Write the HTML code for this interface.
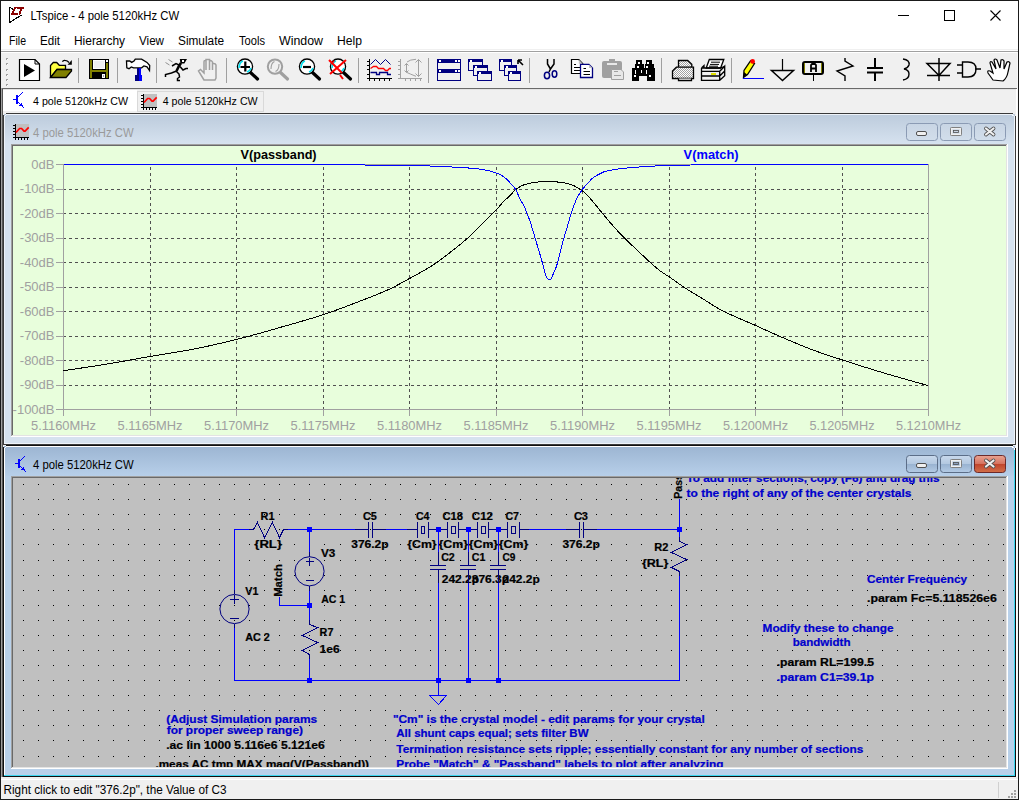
<!DOCTYPE html><html><head><meta charset="utf-8"><style>
html,body{margin:0;padding:0;width:1019px;height:800px;overflow:hidden;background:#f0f0f0;position:relative}
*{box-sizing:border-box}
.a{position:absolute}
svg text{font-family:"Liberation Sans",sans-serif}
body{font-family:"Liberation Sans",sans-serif}

</style></head><body>
<svg class="a" style="left:0;top:0" width="1019" height="800" shape-rendering="crispEdges"><defs>
<linearGradient id="gtI" gradientUnits="userSpaceOnUse" x1="0" y1="114" x2="0" y2="144"><stop offset="0" stop-color="#bccbdc"/><stop offset="1" stop-color="#d6e2ef"/></linearGradient>
<linearGradient id="gtA" gradientUnits="userSpaceOnUse" x1="0" y1="446" x2="0" y2="476"><stop offset="0" stop-color="#9cb5d2"/><stop offset="1" stop-color="#b7cfe9"/></linearGradient>
<linearGradient id="gbtnI" x1="0" y1="0" x2="0" y2="1"><stop offset="0" stop-color="#c8d5e4"/><stop offset="1" stop-color="#d2deeb"/></linearGradient>
<linearGradient id="gbtnA" x1="0" y1="0" x2="0" y2="1"><stop offset="0" stop-color="#c9d9ec"/><stop offset="0.5" stop-color="#b3c8e0"/><stop offset="0.5" stop-color="#98b2d0"/><stop offset="1" stop-color="#b4cbe5"/></linearGradient>
<linearGradient id="gclose" x1="0" y1="0" x2="0" y2="1"><stop offset="0" stop-color="#e9a493"/><stop offset="0.5" stop-color="#d5715d"/><stop offset="0.5" stop-color="#c0432b"/><stop offset="1" stop-color="#d2704a"/></linearGradient>
</defs><rect x="0" y="0" width="1019" height="800" fill="#f0f0f0" /><rect x="1" y="1" width="1017" height="48" fill="#ffffff" /><path d="M9.5 7 V22.5 L21.5 15 M9.5 7 L13 9.5" fill="none" stroke="#000" stroke-width="1.1"/><path d="M14.5 7 H16.8 L13.8 12.8 H17.6 L18 14.6 H10.8 Z" fill="#8b0000"/><path d="M16.8 7 H24.6 L23.4 8.8 H22.3 L20.4 14.5 H18.6 L20.2 8.8 H17 Z" fill="#8b0000"/><text x="30.6" y="20" font-size="12" font-weight="normal" fill="#000" textLength="148.5" lengthAdjust="spacingAndGlyphs" >LTspice - 4 pole 5120kHz CW</text><path d="M898 15.5 H909" stroke="#000" stroke-width="1"/><rect x="944.5" y="10.5" width="10" height="10" fill="none" stroke="#000" stroke-width="1"/><path d="M990.5 10.5 L1000.5 20.5 M1000.5 10.5 L990.5 20.5" stroke="#000" stroke-width="1.1" shape-rendering="auto"/><text x="9" y="45" font-size="12" font-weight="normal" fill="#000" textLength="17" lengthAdjust="spacingAndGlyphs" >File</text><text x="40" y="45" font-size="12" font-weight="normal" fill="#000" textLength="20" lengthAdjust="spacingAndGlyphs" >Edit</text><text x="74" y="45" font-size="12" font-weight="normal" fill="#000" textLength="51" lengthAdjust="spacingAndGlyphs" >Hierarchy</text><text x="139" y="45" font-size="12" font-weight="normal" fill="#000" textLength="25" lengthAdjust="spacingAndGlyphs" >View</text><text x="178" y="45" font-size="12" font-weight="normal" fill="#000" textLength="46" lengthAdjust="spacingAndGlyphs" >Simulate</text><text x="239" y="45" font-size="12" font-weight="normal" fill="#000" textLength="26" lengthAdjust="spacingAndGlyphs" >Tools</text><text x="279" y="45" font-size="12" font-weight="normal" fill="#000" textLength="44" lengthAdjust="spacingAndGlyphs" >Window</text><text x="337" y="45" font-size="12" font-weight="normal" fill="#000" textLength="25" lengthAdjust="spacingAndGlyphs" >Help</text><rect x="1" y="49" width="1017" height="1" fill="#f0f0f0" /><rect x="1" y="50" width="1017" height="1" fill="#ffffff" /><rect x="1" y="51" width="1017" height="1" fill="#a0a0a0" /><rect x="1" y="52" width="1017" height="1" fill="#ffffff" /><rect x="6" y="58" width="2" height="2" fill="#a0a0a0" /><rect x="7" y="59" width="1" height="1" fill="#fff" /><rect x="6" y="63" width="2" height="2" fill="#a0a0a0" /><rect x="7" y="64" width="1" height="1" fill="#fff" /><rect x="6" y="69" width="2" height="2" fill="#a0a0a0" /><rect x="7" y="70" width="1" height="1" fill="#fff" /><rect x="6" y="74" width="2" height="2" fill="#a0a0a0" /><rect x="7" y="75" width="1" height="1" fill="#fff" /><rect x="6" y="79" width="2" height="2" fill="#a0a0a0" /><rect x="7" y="80" width="1" height="1" fill="#fff" /><rect x="6" y="84" width="2" height="2" fill="#a0a0a0" /><rect x="7" y="85" width="1" height="1" fill="#fff" /><g shape-rendering="auto"><path d="M19.5 59.5 H35 L39.5 64 V80.5 H19.5 Z" fill="#fff" stroke="#000" stroke-width="1.2"/><path d="M35 59.5 V64 H39.5" fill="none" stroke="#000"/><path d="M24 64 L35 70.5 L24 77 Z" fill="#000"/><path d="M50.5 77.5 V65.5 L53.3 62.5 H56.7 L59.3 65.3 H65.5 V69.5 H57 L51 77" fill="#ffff40" stroke="#000" stroke-width="1.3"/><path d="M50.5 77.5 L57 69.5 H71.5 V71 L66 77.5 Z" fill="#808000" stroke="#000" stroke-width="1.3"/><path d="M62.5 61.8 Q63 60.2 65 60.4 Q67.5 60.5 69 62.5" fill="none" stroke="#000" stroke-width="1.3"/><path d="M67.5 64.8 H71.8 V60 Z" fill="#000"/><rect x="78" y="58" width="1" height="25" fill="#a0a0a0" /><rect x="89" y="59" width="20" height="20" fill="#000" /><rect x="90" y="60" width="2" height="18" fill="#808000" /><rect x="93" y="60" width="12" height="9" fill="#ffffff" /><rect x="94" y="61" width="10" height="7" fill="#f0f0f0" /><rect x="92" y="70" width="16" height="2" fill="#808000" /><rect x="106" y="63" width="2" height="15" fill="#808000" /><rect x="106" y="60" width="2" height="2" fill="#ffffff" /><rect x="102" y="74" width="3" height="4" fill="#ffffff" /><rect x="103" y="75" width="1" height="2" fill="#a0a0a0" /><rect x="117" y="58" width="1" height="25" fill="#a0a0a0" /><path d="M126.5 61 L129.7 61 L131.7 62.4 L134 61 L135.3 59.2 L141.6 59.2 L147 62.4 L149.7 65.5 L149.5 70.5 L147 66.9 L143.9 66 L141.6 67.8 L133.5 67.8 L131.3 66.9 L129 68.7 L126.8 67.8 Z" fill="#fff" stroke="#000" stroke-width="1.3"/><rect x="137" y="68" width="4" height="7" fill="#000080" /><rect x="139" y="68" width="2" height="7" fill="#0000ff" /><rect x="135" y="75" width="7" height="6" fill="#000080" /><rect x="139" y="75" width="3" height="6" fill="#0000ff" /><rect x="156" y="58" width="1" height="25" fill="#a0a0a0" /><path d="M180.5 59.5 H186 L184 63 L181 63 Z" fill="#000" stroke="#000" stroke-width="1.2"/><rect x="182" y="60" width="2" height="2" fill="#fff" /><path d="M181 63 L179 66 L176.5 71" stroke="#000" stroke-width="2.6" fill="none"/><path d="M179 65 L176 63.5 L172 66 M180 66.5 L183 70 L186 68.5 H188 M176.5 71 L171.5 73 L165.5 74.5 V77 M176.5 71.5 L179 74 L179.5 77 L177.5 78.5 V80.5 H180" stroke="#000" stroke-width="1.5" fill="none"/><path d="M168.5 59.5 L172.5 62 M165.5 62.5 L169.5 65" stroke="#909090" stroke-width="1" fill="none"/><path d="M204 80 L198.5 71 L200.5 69.5 L204 73 V62 Q204 60 206 60.5 V70 V59.5 H209.5 V70 V60.5 Q211.5 60 212.5 62 V70 V63.5 Q215.5 63 216 65 V78 L215 80 Z" fill="#f0f0f0" stroke="#a0a0a0" stroke-width="1.5"/><rect x="226" y="58" width="1" height="25" fill="#a0a0a0" /><line x1="250.5" y1="72.5" x2="257.5" y2="79" stroke="#000" stroke-width="3.2" stroke-linecap="round"/><circle cx="245" cy="66.6" r="7.6" fill="#fff" stroke="#000" stroke-width="1.3"/><path d="M239 68 Q239.5 62 243 61" stroke="#00e0f0" stroke-width="1.6" fill="none"/><path d="M247 72 Q250 71 251 68" stroke="#00e0f0" stroke-width="1.6" fill="none"/><path d="M240.5 67 H250 M245.3 61.5 V71.5" stroke="#000" stroke-width="2.2"/><line x1="280.5" y1="72.5" x2="287.5" y2="79" stroke="#a0a0a0" stroke-width="3.2" stroke-linecap="round"/><circle cx="275" cy="66.6" r="7.2" fill="#f0f0f0" stroke="#a0a0a0" stroke-width="2"/><path d="M271 69 Q271 63 274.5 61.5 M279 64 Q279 70 275.5 71.5" stroke="#a0a0a0" stroke-width="1.1" fill="none"/><line x1="312.5" y1="72.5" x2="319.5" y2="79" stroke="#000" stroke-width="3.2" stroke-linecap="round"/><circle cx="307" cy="66.6" r="7.6" fill="#fff" stroke="#000" stroke-width="1.3"/><path d="M301 68 Q301.5 62 305 61" stroke="#00e0f0" stroke-width="1.6" fill="none"/><path d="M309 72 Q312 71 313 68" stroke="#00e0f0" stroke-width="1.6" fill="none"/><path d="M303 67 H311" stroke="#000" stroke-width="2.2"/><line x1="343.5" y1="72.5" x2="350.5" y2="79" stroke="#000" stroke-width="3.2" stroke-linecap="round"/><circle cx="338" cy="66.6" r="7.6" fill="#fff" stroke="#000" stroke-width="1.3"/><path d="M332 68 Q332.5 62 336 61" stroke="#00e0f0" stroke-width="1.6" fill="none"/><path d="M340 72 Q343 71 344 68" stroke="#00e0f0" stroke-width="1.6" fill="none"/><path d="M329 60 L337 68 L342 73 M346 60 L338 67 L330 74 M340 75 L343 79 M333 61 L334 62" stroke="#ff0000" stroke-width="2"/><rect x="358" y="58" width="1" height="25" fill="#a0a0a0" /><rect x="369" y="59" width="1" height="21" fill="#000" /><rect x="367" y="78" width="25" height="1" fill="#000" /><rect x="367" y="61" width="2" height="1" fill="#000" /><rect x="367" y="65" width="2" height="1" fill="#000" /><rect x="367" y="69" width="2" height="1" fill="#000" /><rect x="367" y="74" width="2" height="1" fill="#000" /><rect x="369" y="79" width="1" height="2" fill="#000" /><rect x="374" y="79" width="1" height="2" fill="#000" /><rect x="379" y="79" width="1" height="2" fill="#000" /><rect x="384" y="79" width="1" height="2" fill="#000" /><rect x="389" y="79" width="1" height="2" fill="#000" /><path d="M370.5 64.5 L375.5 59.5 L380.5 64.5 L385.5 59.5 L390.5 64.5" stroke="#000080" stroke-width="1" fill="none"/><path d="M370.5 68.5 L373.5 66.5 H376.5 L378.5 68.5 H383.5 L385.5 70.5 H387.5 L389.5 68.5 H391" stroke="#ff0000" stroke-width="1.3" fill="none"/><path d="M370.5 72.5 H376.5 V74.5 H379.5 V72.5 H387.5 V74.5 H391" stroke="#000080" stroke-width="1.3" fill="none"/><rect x="400" y="59" width="1" height="20" fill="#a0a0a0" /><rect x="398" y="78" width="24" height="1" fill="#a0a0a0" /><rect x="398" y="61" width="2" height="1" fill="#a0a0a0" /><rect x="398" y="65" width="2" height="1" fill="#a0a0a0" /><rect x="398" y="69" width="2" height="1" fill="#a0a0a0" /><rect x="398" y="74" width="2" height="1" fill="#a0a0a0" /><rect x="405" y="79" width="1" height="2" fill="#a0a0a0" /><rect x="410" y="79" width="1" height="2" fill="#a0a0a0" /><rect x="415" y="79" width="1" height="2" fill="#a0a0a0" /><rect x="420" y="79" width="1" height="2" fill="#a0a0a0" /><path d="M406.5 63.5 V72.5 M404.5 65.5 L406.5 63.5 L408.5 65.5 M404.5 70.5 L406.5 72.5 L408.5 70.5 M418.5 59.5 V76.5 M415.5 62.5 L418.5 59.5 L421.5 62.5 M415.5 73.5 L418.5 76.5 L421.5 73.5 M407 62 Q410 59.5 416 59.3 M407 72.5 Q410 74 416 76.3" stroke="#a0a0a0" stroke-width="1" fill="none"/><rect x="428" y="58" width="1" height="25" fill="#a0a0a0" /><rect x="437" y="59" width="24" height="11" fill="#000080" /><rect x="438" y="63" width="22" height="6" fill="#f0f0f0" /><rect x="439" y="60" width="2" height="2" fill="#fff" /><rect x="455" y="60" width="2" height="2" fill="#fff" /><rect x="458" y="60" width="2" height="2" fill="#fff" /><rect x="437" y="69" width="24" height="12" fill="#000080" /><rect x="438" y="73" width="22" height="7" fill="#f0f0f0" /><rect x="439" y="70" width="2" height="2" fill="#fff" /><rect x="455" y="70" width="2" height="2" fill="#fff" /><rect x="458" y="70" width="2" height="2" fill="#fff" /><rect x="468" y="59" width="15" height="12" fill="#000080" /><rect x="469" y="62" width="13" height="8" fill="#f0f0f0" /><rect x="470" y="60" width="2" height="2" fill="#fff" /><rect x="473" y="65" width="15" height="11" fill="#000080" /><rect x="474" y="68" width="13" height="7" fill="#f0f0f0" /><rect x="475" y="66" width="2" height="2" fill="#fff" /><rect x="477" y="71" width="15" height="10" fill="#000080" /><rect x="478" y="74" width="13" height="6" fill="#f0f0f0" /><rect x="479" y="72" width="2" height="2" fill="#fff" /><rect x="499" y="59" width="13" height="12" fill="#000080" /><rect x="500" y="62" width="11" height="8" fill="#f0f0f0" /><rect x="501" y="60" width="2" height="2" fill="#fff" /><rect x="504" y="65" width="13" height="11" fill="#000080" /><rect x="505" y="68" width="11" height="7" fill="#f0f0f0" /><rect x="506" y="66" width="2" height="2" fill="#fff" /><rect x="508" y="71" width="13" height="10" fill="#000080" /><rect x="509" y="74" width="11" height="6" fill="#f0f0f0" /><rect x="510" y="72" width="2" height="2" fill="#fff" /><path d="M518 60 L523 65 M518 60 V64 M518 60 H522" stroke="#000" stroke-width="1.6" fill="none"/><rect x="529" y="58" width="1" height="25" fill="#a0a0a0" /><path d="M547.5 59 V64 L550.5 69 M554 59 V64 L550.5 69 L549 72" stroke="#000" stroke-width="1.5" fill="none"/><ellipse cx="547" cy="75.5" rx="2.6" ry="3.2" fill="#f0f0f0" stroke="#000080" stroke-width="1.5"/><ellipse cx="554.5" cy="74" rx="2.3" ry="3.2" fill="#f0f0f0" stroke="#000080" stroke-width="1.5"/><path d="M571.5 59.5 H578.8 L582.8 63.7 V73.5 H571.5 Z" fill="#fff" stroke="#000" stroke-width="1.2"/><path d="M578.8 59.5 V63.7 H582.8 Z" fill="#c0c0c0"/><path d="M574 64.5 H576 M574 67.5 H580 M574 70.5 H580" stroke="#000" stroke-width="1"/><path d="M580.5 64.3 H588.9 L592.5 68.1 V77.5 H580.5 Z" fill="#fff" stroke="#000080" stroke-width="1.3"/><path d="M589 64.5 V68 H592.5 Z" fill="#c0c0c0"/><path d="M583.5 68.5 H586 M583.5 71.5 H590 M583.5 74.5 H590" stroke="#000" stroke-width="1"/><rect x="602" y="61" width="20" height="17" fill="#a0a0a0" rx="2"/><rect x="609" y="59" width="6" height="3" fill="#a0a0a0" /><rect x="607" y="63" width="10" height="2" fill="#e8e8e8" /><path d="M611.5 69.5 H621 L623.5 72 V79.5 H611.5 Z" fill="#e8e8e8" stroke="#a0a0a0" stroke-width="1"/><path d="M614 71.5 H618 M614 75.5 H621" stroke="#a0a0a0" stroke-width="1"/><rect x="636" y="60" width="6" height="5" fill="#000" /><rect x="635" y="64" width="9" height="5" fill="#000" /><rect x="632" y="68" width="12" height="13" fill="#000" /><rect x="644" y="68" width="3" height="8" fill="#000" /><rect x="646" y="60" width="6" height="5" fill="#000" /><rect x="645" y="64" width="9" height="5" fill="#000" /><rect x="647" y="68" width="8" height="13" fill="#000" /><rect x="652" y="68" width="3" height="13" fill="#000" /><rect x="638" y="62" width="2" height="2" fill="#fff" /><rect x="647" y="62" width="2" height="2" fill="#fff" /><rect x="637" y="66" width="2" height="2" fill="#fff" /><rect x="646" y="66" width="2" height="2" fill="#fff" /><rect x="635" y="70" width="1" height="4" fill="#fff" /><rect x="641" y="70" width="1" height="3" fill="#fff" /><rect x="646" y="70" width="1" height="4" fill="#fff" /><rect x="634" y="75" width="2" height="2" fill="#fff" /><rect x="649" y="75" width="2" height="2" fill="#fff" /><rect x="639" y="76" width="8" height="5" fill="#f0f0f0" /><rect x="661" y="58" width="1" height="25" fill="#a0a0a0" /><defs><pattern id="dith" width="2" height="2" patternUnits="userSpaceOnUse"><rect width="2" height="2" fill="#fff"/><rect width="1" height="1" fill="#a0a0a0"/><rect x="1" y="1" width="1" height="1" fill="#a0a0a0"/></pattern></defs><path d="M678.5 67 V60.5 H687.7 L691.8 64.4 V67" fill="url(#dith)" stroke="#000" stroke-width="1.3"/><path d="M672.5 78.5 V71 L676.4 67.2 H693.5 V78.5 Z" fill="url(#dith)" stroke="#000" stroke-width="1.3"/><path d="M678.5 78.5 V80.5 H691.5 V78.5" fill="#fff" stroke="#000" stroke-width="1.3"/><path d="M709.3 59.5 H723.8 L720.6 68 H706.2 Z" fill="#fff" stroke="#000" stroke-width="1.3"/><path d="M711 62.2 H720 M710 64.4 H719 M709 66.2 H718" stroke="#000" stroke-width="1"/><path d="M701.5 68 L704 65.6 V68 M701.5 68 V80.3 H719.7 L724.7 75.7 V66.2 L719.7 71.3 H701.5 M719.7 71.3 V80.3 M724.7 71 L719.7 76 H701.5" fill="none" stroke="#000" stroke-width="1.3"/><path d="M702 68 H720 L724.5 66.5" fill="none" stroke="#000" stroke-width="1.3"/><rect x="711" y="73" width="5" height="2" fill="#e0e000" /><rect x="731" y="58" width="1" height="25" fill="#a0a0a0" /><path d="M743.5 77.5 L744 70.5 L750.5 61 L754.5 63.5 L747.5 74.5 Z" fill="#ffff00" stroke="#000" stroke-width="1.3"/><path d="M743.5 77.5 L744 72 L747 74.5 Z" fill="#000"/><circle cx="752.6" cy="61.4" r="2.4" fill="#ff0000"/><rect x="743" y="78" width="21" height="1" fill="#0000ff" /><path d="M782.5 59 V70" stroke="#000" stroke-width="1.2"/><path d="M771.5 70.5 H793.5 L782.5 80.5 Z" stroke="#000" stroke-width="1.5" fill="none"/><rect x="803" y="62" width="20" height="12" rx="2" fill="#f0f0f0" stroke="#000" stroke-width="2"/><rect x="804" y="63" width="1" height="10" fill="#808000" /><rect x="821" y="63" width="1" height="10" fill="#808000" /><rect x="813" y="74" width="1" height="7" fill="#000" /><path d="M811 72 V65 L812 64 H815 L816 65 V72 M811 68.5 H816" stroke="#000" stroke-width="1.8" fill="none"/><path d="M845 58 V61 L853 66 L837 71 L845 76 V81" stroke="#000" stroke-width="1.4" fill="none"/><path d="M875 58 V68 M875 73 V81 M867 68 H883 M867 72.5 H883" stroke="#000" stroke-width="2"/><path d="M903 59 Q910 60 909 65 Q908 68 904 69 Q909 70 909 74 Q909 79 903 80" stroke="#000" stroke-width="1.4" fill="none"/><path d="M939 58 V81 M927 63.5 H950 L939 75.5 Z M927 75.5 H950" stroke="#000" stroke-width="1.5" fill="none"/><path d="M957 65 H962 M957 73 H962 M975 69 H981" stroke="#000" stroke-width="1.6"/><path d="M962.5 62 H968 Q976 62 976 69 Q976 77 968 77 H962.5 Z" stroke="#000" stroke-width="1.4" fill="none"/><path d="M993 80 L988 73 Q987 70 990 71 L993 73 L990 63 Q990 61 992 62 L996 69 L994 60 Q995 58 997 60 L1000 68 L1001 60 Q1003 59 1004 61 L1004 69 L1007 62 Q1009 61 1010 63 L1008 72 Q1007 78 1003 81 Z" fill="#fff" stroke="#000" stroke-width="1.2"/></g><rect x="1" y="88" width="1017" height="1" fill="#696969" /><rect x="1" y="89" width="1017" height="1" fill="#e3e3e3" /><rect x="2" y="90" width="135" height="21" fill="#ffffff" /><rect x="137" y="91" width="126" height="20" fill="#f0f0f0" stroke="#d9d9d9" stroke-width="1"/><rect x="16" y="95" width="2" height="9" fill="#0000ff" /><rect x="13" y="99" width="3" height="1" fill="#0000ff" /><rect x="18" y="96" width="1" height="1" fill="#0000ff" /><rect x="19" y="95" width="1" height="1" fill="#0000ff" /><rect x="20" y="94" width="1" height="1" fill="#0000ff" /><rect x="21" y="93" width="1" height="1" fill="#0000ff" /><rect x="22" y="92" width="1" height="1" fill="#0000ff" /><rect x="18" y="102" width="1" height="1" fill="#0000ff" /><rect x="19" y="103" width="1" height="1" fill="#0000ff" /><rect x="20" y="104" width="1" height="1" fill="#0000ff" /><rect x="21" y="105" width="1" height="1" fill="#0000ff" /><rect x="22" y="106" width="1" height="1" fill="#0000ff" /><rect x="23" y="107" width="1" height="1" fill="#0000ff" /><rect x="19" y="105" width="1" height="1" fill="#0000ff" /><rect x="20" y="104" width="1" height="1" fill="#0000ff" /><rect x="20" y="105" width="1" height="1" fill="#0000ff" /><rect x="21" y="103" width="1" height="1" fill="#0000ff" /><rect x="21" y="104" width="1" height="1" fill="#0000ff" /><rect x="21" y="105" width="1" height="1" fill="#0000ff" /><rect x="22" y="105" width="1" height="1" fill="#0000ff" /><rect x="22" y="106" width="1" height="1" fill="#0000ff" /><text x="33" y="105.2" font-size="11.6" font-weight="normal" fill="#000" textLength="95" lengthAdjust="spacingAndGlyphs" >4 pole 5120kHz CW</text><rect x="144" y="94" width="13" height="13" fill="#c0c0c0" /><rect x="143" y="94" width="1" height="16" fill="#000" /><rect x="141" y="95" width="2" height="1" fill="#000" /><rect x="141" y="98" width="2" height="1" fill="#000" /><rect x="141" y="101" width="2" height="1" fill="#000" /><rect x="141" y="104" width="2" height="1" fill="#000" /><rect x="141" y="107" width="2" height="1" fill="#000" /><rect x="141" y="107" width="16" height="1" fill="#000" /><rect x="143" y="108" width="1" height="2" fill="#000" /><rect x="146" y="108" width="1" height="2" fill="#000" /><rect x="149" y="108" width="1" height="2" fill="#000" /><rect x="152" y="108" width="1" height="2" fill="#000" /><rect x="155" y="108" width="1" height="2" fill="#000" /><path d="M144 102.5 L147.6 98.5 L149.6 98.5 L152 101.1 L153.1 101.1 L156.7 97.4" stroke="#ff0000" stroke-width="1.7" fill="none" shape-rendering="auto"/><text x="162.7" y="105.2" font-size="11.6" font-weight="normal" fill="#000" textLength="95" lengthAdjust="spacingAndGlyphs" >4 pole 5120kHz CW</text><rect x="1" y="88" width="1" height="690" fill="#a0a0a0" /><rect x="2" y="89" width="1" height="689" fill="#555555" /><rect x="1016" y="89" width="1" height="689" fill="#ffffff" /><rect x="1017" y="52" width="1" height="747" fill="#f8f8f8" /><path d="M3.5 444.5 V118 Q3.5 113.5 8 113.5 H1010 Q1015.5 113.5 1015.5 118 V444.5 Z" fill="#d6e2ef" stroke="#3a3a3a" stroke-width="1"/><rect x="4" y="114" width="1011" height="30" fill="url(#gtI)" /><path d="M4.5 444 V118 Q4.5 114.5 8 114.5 H1010 Q1014.5 114.5 1014.5 118" fill="none" stroke="#eef3f9" stroke-width="1"/><rect x="1014" y="118" width="1" height="326" fill="#eef3f9" /><rect x="4" y="443" width="1011" height="1" fill="#eef3f9" /><rect x="11" y="144" width="997" height="293" fill="#ffffff" /><rect x="11" y="144" width="996" height="1" fill="#a0a0a0" /><rect x="11" y="144" width="1" height="292" fill="#a0a0a0" /><rect x="12" y="145" width="994" height="1" fill="#696969" /><rect x="12" y="145" width="1" height="290" fill="#696969" /><rect x="12" y="435" width="995" height="1" fill="#e3e3e3" /><rect x="1006" y="145" width="1" height="291" fill="#e3e3e3" /><rect x="13" y="146" width="993" height="289" fill="#e8fedc" /><rect x="16" y="124" width="13" height="13" fill="#c0c0c0" /><rect x="15" y="124" width="1" height="16" fill="#000" /><rect x="13" y="125" width="2" height="1" fill="#000" /><rect x="13" y="128" width="2" height="1" fill="#000" /><rect x="13" y="131" width="2" height="1" fill="#000" /><rect x="13" y="134" width="2" height="1" fill="#000" /><rect x="13" y="137" width="2" height="1" fill="#000" /><rect x="13" y="137" width="16" height="1" fill="#000" /><rect x="15" y="138" width="1" height="2" fill="#000" /><rect x="18" y="138" width="1" height="2" fill="#000" /><rect x="21" y="138" width="1" height="2" fill="#000" /><rect x="24" y="138" width="1" height="2" fill="#000" /><rect x="27" y="138" width="1" height="2" fill="#000" /><path d="M16 132.5 L19.6 128.5 L21.6 128.5 L24 131.1 L25.1 131.1 L28.7 127.4" stroke="#ff0000" stroke-width="1.7" fill="none" shape-rendering="auto"/><text x="33" y="137.3" font-size="12" font-weight="normal" fill="#9a9a9a" textLength="100.6" lengthAdjust="spacingAndGlyphs" >4 pole 5120kHz CW</text><g shape-rendering="auto"><rect x="906.5" y="123.5" width="31" height="17" rx="3" fill="url(#gbtnI)" stroke="#8b9bb4" stroke-width="1"/><rect x="940.5" y="123.5" width="31" height="17" rx="3" fill="url(#gbtnI)" stroke="#8b9bb4" stroke-width="1"/><rect x="974.5" y="123.5" width="31" height="17" rx="3" fill="url(#gbtnI)" stroke="#8b9bb4" stroke-width="1"/><rect x="916.5" y="131.5" width="10" height="4" rx="1.5" fill="#f0f0f0" stroke="#505050"/><rect x="950.5" y="127.5" width="11" height="8" rx="1" fill="none" stroke="#505050" stroke-width="1"/><rect x="951.5" y="128.5" width="9" height="6" fill="none" stroke="#f0f0f0" stroke-width="1.6"/><rect x="953.5" y="130.5" width="5" height="2" fill="#c8d4e4" stroke="#505050" stroke-width="0.8"/><path d="M986 128.5 L993.5 134.5 M993.5 128.5 L986 134.5" stroke="#505050" stroke-width="3.8" stroke-linecap="round"/><path d="M986 128.5 L993.5 134.5 M993.5 128.5 L986 134.5" stroke="#f0f0f0" stroke-width="2.2" stroke-linecap="round"/></g><path d="M3.5 776.5 V450 Q3.5 445.5 8 445.5 H1010 Q1015.5 445.5 1015.5 450 V776.5 Z" fill="#b9d1ea" stroke="#101010" stroke-width="1"/><rect x="4" y="446" width="1011" height="30" fill="url(#gtA)" /><path d="M4.5 776 V450 Q4.5 446.5 8 446.5 H1010 Q1014.5 446.5 1014.5 450" fill="none" stroke="#ffffff" stroke-width="1"/><rect x="1014" y="450" width="1" height="326" fill="#3cd7f0" /><rect x="4" y="775" width="1011" height="1" fill="#3cd7f0" /><rect x="11" y="476" width="997" height="293" fill="#ffffff" /><rect x="11" y="476" width="996" height="1" fill="#a0a0a0" /><rect x="11" y="476" width="1" height="292" fill="#a0a0a0" /><rect x="12" y="477" width="994" height="1" fill="#696969" /><rect x="12" y="477" width="1" height="290" fill="#696969" /><rect x="12" y="767" width="995" height="1" fill="#e3e3e3" /><rect x="1006" y="477" width="1" height="291" fill="#e3e3e3" /><rect x="13" y="478" width="993" height="289" fill="#c0c0c0" /><rect x="18" y="459" width="2" height="9" fill="#0000ff" /><rect x="15" y="463" width="3" height="1" fill="#0000ff" /><rect x="20" y="460" width="1" height="1" fill="#0000ff" /><rect x="21" y="459" width="1" height="1" fill="#0000ff" /><rect x="22" y="458" width="1" height="1" fill="#0000ff" /><rect x="23" y="457" width="1" height="1" fill="#0000ff" /><rect x="24" y="456" width="1" height="1" fill="#0000ff" /><rect x="20" y="466" width="1" height="1" fill="#0000ff" /><rect x="21" y="467" width="1" height="1" fill="#0000ff" /><rect x="22" y="468" width="1" height="1" fill="#0000ff" /><rect x="23" y="469" width="1" height="1" fill="#0000ff" /><rect x="24" y="470" width="1" height="1" fill="#0000ff" /><rect x="25" y="471" width="1" height="1" fill="#0000ff" /><rect x="21" y="469" width="1" height="1" fill="#0000ff" /><rect x="22" y="468" width="1" height="1" fill="#0000ff" /><rect x="22" y="469" width="1" height="1" fill="#0000ff" /><rect x="23" y="467" width="1" height="1" fill="#0000ff" /><rect x="23" y="468" width="1" height="1" fill="#0000ff" /><rect x="23" y="469" width="1" height="1" fill="#0000ff" /><rect x="24" y="469" width="1" height="1" fill="#0000ff" /><rect x="24" y="470" width="1" height="1" fill="#0000ff" /><text x="33" y="469.3" font-size="12" font-weight="normal" fill="#000" textLength="100.6" lengthAdjust="spacingAndGlyphs" >4 pole 5120kHz CW</text><g shape-rendering="auto"><rect x="906.5" y="455.5" width="31" height="17" rx="3" fill="url(#gbtnA)" stroke="#5c6e88" stroke-width="1"/><rect x="940.5" y="455.5" width="31" height="17" rx="3" fill="url(#gbtnA)" stroke="#5c6e88" stroke-width="1"/><rect x="974.5" y="455.5" width="31" height="17" rx="3" fill="url(#gclose)" stroke="#6b2a2a" stroke-width="1"/><rect x="916.5" y="463.5" width="10" height="4" rx="1.5" fill="#f0f0f0" stroke="#505050"/><rect x="950.5" y="459.5" width="11" height="8" rx="1" fill="none" stroke="#505050" stroke-width="1"/><rect x="951.5" y="460.5" width="9" height="6" fill="none" stroke="#f0f0f0" stroke-width="1.6"/><rect x="953.5" y="462.5" width="5" height="2" fill="#8aa0c0" stroke="#505050" stroke-width="0.8"/><path d="M986 460.5 L993.5 466.5 M993.5 460.5 L986 466.5" stroke="#505050" stroke-width="3.8" stroke-linecap="round"/><path d="M986 460.5 L993.5 466.5 M993.5 460.5 L986 466.5" stroke="#f0f0f0" stroke-width="2.2" stroke-linecap="round"/></g><rect x="1" y="777" width="1017" height="2" fill="#f0f0f0" /><rect x="1" y="779" width="1017" height="1" fill="#ffffff" /><rect x="1" y="780" width="1017" height="19" fill="#f0f0f0" /><rect x="998" y="782" width="1" height="16" fill="#d0d0d0" /><rect x="1014" y="790" width="2" height="2" fill="#a0a0a0" /><rect x="1011" y="793" width="2" height="2" fill="#a0a0a0" /><rect x="1014" y="793" width="2" height="2" fill="#a0a0a0" /><rect x="1008" y="796" width="2" height="2" fill="#a0a0a0" /><rect x="1011" y="796" width="2" height="2" fill="#a0a0a0" /><rect x="1014" y="796" width="2" height="2" fill="#a0a0a0" /><text x="3.5" y="794.3" font-size="12" font-weight="normal" fill="#000" textLength="223" lengthAdjust="spacingAndGlyphs" >Right click to edit &quot;376.2p&quot;, the Value of C3</text><rect x="0" y="0" width="1019" height="1" fill="#1a1a1a" /><rect x="0" y="0" width="1" height="800" fill="#1a1a1a" /><rect x="1018" y="0" width="1" height="800" fill="#1a1a1a" /><rect x="0" y="799" width="1019" height="1" fill="#1a1a1a" /></svg>
<svg class="a" style="left:0;top:0" width="1019" height="800"><defs><clipPath id="pc"><rect x="13" y="146" width="993" height="289"/></clipPath></defs><g clip-path="url(#pc)"><g stroke="#505050" stroke-width="1" stroke-dasharray="3,3" shape-rendering="crispEdges"><line x1="150.5" y1="167" x2="150.5" y2="409" /><line x1="236.5" y1="167" x2="236.5" y2="409" /><line x1="323.5" y1="167" x2="323.5" y2="409" /><line x1="409.5" y1="167" x2="409.5" y2="409" /><line x1="496.5" y1="167" x2="496.5" y2="409" /><line x1="582.5" y1="167" x2="582.5" y2="409" /><line x1="669.5" y1="167" x2="669.5" y2="409" /><line x1="755.5" y1="167" x2="755.5" y2="409" /><line x1="842.5" y1="167" x2="842.5" y2="409" /><line x1="63" y1="189.5" x2="928" y2="189.5" /><line x1="63" y1="213.5" x2="928" y2="213.5" /><line x1="63" y1="238.5" x2="928" y2="238.5" /><line x1="63" y1="262.5" x2="928" y2="262.5" /><line x1="63" y1="287.5" x2="928" y2="287.5" /><line x1="63" y1="311.5" x2="928" y2="311.5" /><line x1="63" y1="336.5" x2="928" y2="336.5" /><line x1="63" y1="360.5" x2="928" y2="360.5" /><line x1="63" y1="385.5" x2="928" y2="385.5" /></g><g shape-rendering="crispEdges"><path d="M63.5 164 V416 M928.5 164 V416 M56 409.5 H929 M63 164.5 H929" stroke="#a0a0a0" stroke-width="1" fill="none"/><line x1="56" y1="164.5" x2="63" y2="164.5" stroke="#a0a0a0"/><line x1="56" y1="189.5" x2="63" y2="189.5" stroke="#a0a0a0"/><line x1="56" y1="213.5" x2="63" y2="213.5" stroke="#a0a0a0"/><line x1="56" y1="238.5" x2="63" y2="238.5" stroke="#a0a0a0"/><line x1="56" y1="262.5" x2="63" y2="262.5" stroke="#a0a0a0"/><line x1="56" y1="287.5" x2="63" y2="287.5" stroke="#a0a0a0"/><line x1="56" y1="311.5" x2="63" y2="311.5" stroke="#a0a0a0"/><line x1="56" y1="336.5" x2="63" y2="336.5" stroke="#a0a0a0"/><line x1="56" y1="360.5" x2="63" y2="360.5" stroke="#a0a0a0"/><line x1="56" y1="385.5" x2="63" y2="385.5" stroke="#a0a0a0"/><line x1="56" y1="409.5" x2="63" y2="409.5" stroke="#a0a0a0"/><line x1="63.5" y1="409" x2="63.5" y2="416" stroke="#a0a0a0"/><line x1="150.5" y1="409" x2="150.5" y2="416" stroke="#a0a0a0"/><line x1="236.5" y1="409" x2="236.5" y2="416" stroke="#a0a0a0"/><line x1="323.5" y1="409" x2="323.5" y2="416" stroke="#a0a0a0"/><line x1="409.5" y1="409" x2="409.5" y2="416" stroke="#a0a0a0"/><line x1="496.5" y1="409" x2="496.5" y2="416" stroke="#a0a0a0"/><line x1="582.5" y1="409" x2="582.5" y2="416" stroke="#a0a0a0"/><line x1="669.5" y1="409" x2="669.5" y2="416" stroke="#a0a0a0"/><line x1="755.5" y1="409" x2="755.5" y2="416" stroke="#a0a0a0"/><line x1="842.5" y1="409" x2="842.5" y2="416" stroke="#a0a0a0"/><line x1="928.5" y1="409" x2="928.5" y2="416" stroke="#a0a0a0"/></g><text x="54.5" y="168.7" font-size="13" font-weight="normal" fill="#a0a0a0" text-anchor="end" >0dB</text><text x="54.5" y="193.2" font-size="13" font-weight="normal" fill="#a0a0a0" text-anchor="end" >-10dB</text><text x="54.5" y="217.7" font-size="13" font-weight="normal" fill="#a0a0a0" text-anchor="end" >-20dB</text><text x="54.5" y="242.2" font-size="13" font-weight="normal" fill="#a0a0a0" text-anchor="end" >-30dB</text><text x="54.5" y="266.7" font-size="13" font-weight="normal" fill="#a0a0a0" text-anchor="end" >-40dB</text><text x="54.5" y="291.2" font-size="13" font-weight="normal" fill="#a0a0a0" text-anchor="end" >-50dB</text><text x="54.5" y="315.7" font-size="13" font-weight="normal" fill="#a0a0a0" text-anchor="end" >-60dB</text><text x="54.5" y="340.2" font-size="13" font-weight="normal" fill="#a0a0a0" text-anchor="end" >-70dB</text><text x="54.5" y="364.7" font-size="13" font-weight="normal" fill="#a0a0a0" text-anchor="end" >-80dB</text><text x="54.5" y="389.2" font-size="13" font-weight="normal" fill="#a0a0a0" text-anchor="end" >-90dB</text><text x="54.5" y="413.7" font-size="13" font-weight="normal" fill="#a0a0a0" text-anchor="end" >-100dB</text><text x="63.5" y="429.6" font-size="13" font-weight="normal" fill="#a0a0a0" textLength="65" lengthAdjust="spacingAndGlyphs" text-anchor="middle" >5.1160MHz</text><text x="150.0" y="429.6" font-size="13" font-weight="normal" fill="#a0a0a0" textLength="65" lengthAdjust="spacingAndGlyphs" text-anchor="middle" >5.1165MHz</text><text x="236.5" y="429.6" font-size="13" font-weight="normal" fill="#a0a0a0" textLength="65" lengthAdjust="spacingAndGlyphs" text-anchor="middle" >5.1170MHz</text><text x="323.0" y="429.6" font-size="13" font-weight="normal" fill="#a0a0a0" textLength="65" lengthAdjust="spacingAndGlyphs" text-anchor="middle" >5.1175MHz</text><text x="409.5" y="429.6" font-size="13" font-weight="normal" fill="#a0a0a0" textLength="65" lengthAdjust="spacingAndGlyphs" text-anchor="middle" >5.1180MHz</text><text x="496.0" y="429.6" font-size="13" font-weight="normal" fill="#a0a0a0" textLength="65" lengthAdjust="spacingAndGlyphs" text-anchor="middle" >5.1185MHz</text><text x="582.5" y="429.6" font-size="13" font-weight="normal" fill="#a0a0a0" textLength="65" lengthAdjust="spacingAndGlyphs" text-anchor="middle" >5.1190MHz</text><text x="669.0" y="429.6" font-size="13" font-weight="normal" fill="#a0a0a0" textLength="65" lengthAdjust="spacingAndGlyphs" text-anchor="middle" >5.1195MHz</text><text x="755.5" y="429.6" font-size="13" font-weight="normal" fill="#a0a0a0" textLength="65" lengthAdjust="spacingAndGlyphs" text-anchor="middle" >5.1200MHz</text><text x="842.0" y="429.6" font-size="13" font-weight="normal" fill="#a0a0a0" textLength="65" lengthAdjust="spacingAndGlyphs" text-anchor="middle" >5.1205MHz</text><text x="928.5" y="429.6" font-size="13" font-weight="normal" fill="#a0a0a0" textLength="65" lengthAdjust="spacingAndGlyphs" text-anchor="middle" >5.1210MHz</text><text x="240.6" y="158.8" font-size="13" font-weight="bold" fill="#000" textLength="76" lengthAdjust="spacingAndGlyphs" >V(passband)</text><text x="683.6" y="158.8" font-size="13" font-weight="bold" fill="#0000ff" textLength="55" lengthAdjust="spacingAndGlyphs" >V(match)</text><polyline points="63.3,370.60 64.3,370.46 65.3,370.33 66.3,370.19 67.3,370.05 68.3,369.91 69.3,369.77 70.3,369.63 71.3,369.49 72.3,369.34 73.3,369.20 74.3,369.06 75.3,368.91 76.3,368.77 77.3,368.62 78.3,368.48 79.3,368.33 80.3,368.18 81.3,368.04 82.3,367.89 83.3,367.74 84.3,367.59 85.3,367.44 86.3,367.29 87.3,367.14 88.3,366.99 89.3,366.83 90.3,366.68 91.3,366.53 92.3,366.37 93.3,366.22 94.3,366.07 95.3,365.91 96.3,365.75 97.3,365.60 98.3,365.44 99.3,365.28 100.3,365.12 101.3,364.97 102.3,364.81 103.3,364.65 104.3,364.49 105.3,364.33 106.3,364.16 107.3,364.00 108.3,363.84 109.3,363.67 110.3,363.51 111.3,363.34 112.3,363.17 113.3,363.00 114.3,362.83 115.3,362.66 116.3,362.49 117.3,362.32 118.3,362.14 119.3,361.97 120.3,361.79 121.3,361.61 122.3,361.44 123.3,361.26 124.3,361.08 125.3,360.90 126.3,360.72 127.3,360.54 128.3,360.36 129.3,360.18 130.3,360.00 131.3,359.82 132.3,359.64 133.3,359.46 134.3,359.28 135.3,359.10 136.3,358.92 137.3,358.74 138.3,358.56 139.3,358.38 140.3,358.20 141.3,358.02 142.3,357.84 143.3,357.66 144.3,357.49 145.3,357.31 146.3,357.13 147.3,356.96 148.3,356.78 149.3,356.61 150.3,356.43 151.3,356.26 152.3,356.09 153.3,355.92 154.3,355.75 155.3,355.59 156.3,355.42 157.3,355.25 158.3,355.09 159.3,354.92 160.3,354.76 161.3,354.60 162.3,354.43 163.3,354.27 164.3,354.11 165.3,353.95 166.3,353.79 167.3,353.62 168.3,353.46 169.3,353.30 170.3,353.14 171.3,352.97 172.3,352.81 173.3,352.65 174.3,352.48 175.3,352.32 176.3,352.15 177.3,351.99 178.3,351.82 179.3,351.65 180.3,351.48 181.3,351.31 182.3,351.14 183.3,350.97 184.3,350.79 185.3,350.61 186.3,350.44 187.3,350.26 188.3,350.08 189.3,349.89 190.3,349.71 191.3,349.52 192.3,349.33 193.3,349.14 194.3,348.94 195.3,348.75 196.3,348.55 197.3,348.35 198.3,348.15 199.3,347.95 200.3,347.74 201.3,347.54 202.3,347.33 203.3,347.12 204.3,346.91 205.3,346.70 206.3,346.49 207.3,346.27 208.3,346.05 209.3,345.83 210.3,345.62 211.3,345.39 212.3,345.17 213.3,344.95 214.3,344.72 215.3,344.50 216.3,344.27 217.3,344.04 218.3,343.81 219.3,343.58 220.3,343.35 221.3,343.11 222.3,342.88 223.3,342.64 224.3,342.41 225.3,342.17 226.3,341.93 227.3,341.69 228.3,341.45 229.3,341.21 230.3,340.97 231.3,340.73 232.3,340.48 233.3,340.24 234.3,339.99 235.3,339.75 236.3,339.50 237.3,339.25 238.3,339.00 239.3,338.75 240.3,338.50 241.3,338.24 242.3,337.98 243.3,337.72 244.3,337.46 245.3,337.20 246.3,336.93 247.3,336.67 248.3,336.40 249.3,336.13 250.3,335.86 251.3,335.59 252.3,335.31 253.3,335.04 254.3,334.76 255.3,334.49 256.3,334.21 257.3,333.93 258.3,333.65 259.3,333.37 260.3,333.09 261.3,332.81 262.3,332.52 263.3,332.24 264.3,331.96 265.3,331.67 266.3,331.39 267.3,331.10 268.3,330.81 269.3,330.53 270.3,330.24 271.3,329.95 272.3,329.67 273.3,329.38 274.3,329.09 275.3,328.80 276.3,328.52 277.3,328.23 278.3,327.94 279.3,327.66 280.3,327.37 281.3,327.09 282.3,326.80 283.3,326.52 284.3,326.23 285.3,325.95 286.3,325.66 287.3,325.38 288.3,325.09 289.3,324.81 290.3,324.52 291.3,324.24 292.3,323.95 293.3,323.67 294.3,323.38 295.3,323.10 296.3,322.81 297.3,322.52 298.3,322.23 299.3,321.95 300.3,321.66 301.3,321.36 302.3,321.07 303.3,320.78 304.3,320.49 305.3,320.19 306.3,319.90 307.3,319.60 308.3,319.30 309.3,319.00 310.3,318.70 311.3,318.39 312.3,318.09 313.3,317.78 314.3,317.47 315.3,317.16 316.3,316.85 317.3,316.53 318.3,316.22 319.3,315.90 320.3,315.58 321.3,315.25 322.3,314.93 323.3,314.60 324.3,314.27 325.3,313.94 326.3,313.60 327.3,313.26 328.3,312.92 329.3,312.57 330.3,312.22 331.3,311.87 332.3,311.52 333.3,311.17 334.3,310.81 335.3,310.45 336.3,310.09 337.3,309.73 338.3,309.36 339.3,308.99 340.3,308.62 341.3,308.25 342.3,307.88 343.3,307.51 344.3,307.13 345.3,306.76 346.3,306.38 347.3,306.00 348.3,305.62 349.3,305.24 350.3,304.86 351.3,304.47 352.3,304.09 353.3,303.71 354.3,303.32 355.3,302.93 356.3,302.55 357.3,302.16 358.3,301.77 359.3,301.39 360.3,301.00 361.3,300.61 362.3,300.23 363.3,299.84 364.3,299.46 365.3,299.07 366.3,298.68 367.3,298.30 368.3,297.91 369.3,297.52 370.3,297.13 371.3,296.74 372.3,296.35 373.3,295.96 374.3,295.56 375.3,295.16 376.3,294.76 377.3,294.35 378.3,293.95 379.3,293.53 380.3,293.12 381.3,292.70 382.3,292.27 383.3,291.84 384.3,291.41 385.3,290.97 386.3,290.53 387.3,290.08 388.3,289.62 389.3,289.16 390.3,288.69 391.3,288.21 392.3,287.72 393.3,287.22 394.3,286.72 395.3,286.20 396.3,285.68 397.3,285.16 398.3,284.63 399.3,284.09 400.3,283.55 401.3,283.01 402.3,282.46 403.3,281.92 404.3,281.37 405.3,280.82 406.3,280.26 407.3,279.71 408.3,279.16 409.3,278.61 410.3,278.06 411.3,277.51 412.3,276.97 413.3,276.42 414.3,275.88 415.3,275.33 416.3,274.78 417.3,274.23 418.3,273.68 419.3,273.13 420.3,272.57 421.3,272.01 422.3,271.44 423.3,270.87 424.3,270.30 425.3,269.71 426.3,269.13 427.3,268.53 428.3,267.93 429.3,267.32 430.3,266.70 431.3,266.07 432.3,265.43 433.3,264.78 434.3,264.11 435.3,263.44 436.3,262.75 437.3,262.05 438.3,261.34 439.3,260.62 440.3,259.89 441.3,259.15 442.3,258.41 443.3,257.66 444.3,256.90 445.3,256.14 446.3,255.38 447.3,254.61 448.3,253.84 449.3,253.07 450.3,252.30 451.3,251.52 452.3,250.74 453.3,249.96 454.3,249.18 455.3,248.39 456.3,247.59 457.3,246.79 458.3,245.99 459.3,245.17 460.3,244.36 461.3,243.53 462.3,242.70 463.3,241.86 464.3,241.01 465.3,240.15 466.3,239.29 467.3,238.41 468.3,237.53 469.3,236.63 470.3,235.73 471.3,234.80 472.3,233.85 473.3,232.88 474.3,231.90 475.3,230.90 476.3,229.89 477.3,228.87 478.3,227.84 479.3,226.81 480.3,225.78 481.3,224.75 482.3,223.73 483.3,222.71 484.3,221.70 485.3,220.70 486.3,219.72 487.3,218.74 488.3,217.77 489.3,216.80 490.3,215.83 491.3,214.86 492.3,213.88 493.3,212.88 494.3,211.88 495.3,210.85 496.3,209.80 497.3,208.71 498.3,207.57 499.3,206.39 500.3,205.21 501.3,204.04 502.3,202.91 503.3,201.82 504.3,200.80 505.3,199.86 506.3,198.96 507.3,198.08 508.3,197.20 509.3,196.28 510.3,195.29 511.3,194.19 512.3,193.04 513.3,191.90 514.3,190.83 515.3,189.91 516.3,189.16 517.3,188.46 518.3,187.79 519.3,187.16 520.3,186.57 521.3,186.02 522.3,185.52 523.3,185.08 524.3,184.69 525.3,184.36 526.3,184.08 527.3,183.82 528.3,183.59 529.3,183.37 530.3,183.17 531.3,182.99 532.3,182.82 533.3,182.67 534.3,182.53 535.3,182.40 536.3,182.27 537.3,182.15 538.3,182.02 539.3,181.90 540.3,181.78 541.3,181.67 542.3,181.57 543.3,181.48 544.3,181.41 545.3,181.35 546.3,181.32 547.3,181.30 548.3,181.31 549.3,181.33 550.3,181.37 551.3,181.42 552.3,181.49 553.3,181.57 554.3,181.66 555.3,181.76 556.3,181.87 557.3,181.98 558.3,182.10 559.3,182.22 560.3,182.34 561.3,182.46 562.3,182.60 563.3,182.76 564.3,182.94 565.3,183.13 566.3,183.35 567.3,183.58 568.3,183.83 569.3,184.09 570.3,184.38 571.3,184.69 572.3,185.05 573.3,185.47 574.3,185.93 575.3,186.43 576.3,186.97 577.3,187.55 578.3,188.16 579.3,188.79 580.3,189.45 581.3,190.13 582.3,190.83 583.3,191.57 584.3,192.41 585.3,193.32 586.3,194.28 587.3,195.28 588.3,196.30 589.3,197.37 590.3,198.50 591.3,199.68 592.3,200.89 593.3,202.11 594.3,203.32 595.3,204.53 596.3,205.75 597.3,206.99 598.3,208.23 599.3,209.47 600.3,210.71 601.3,211.94 602.3,213.16 603.3,214.36 604.3,215.57 605.3,216.78 606.3,217.98 607.3,219.18 608.3,220.37 609.3,221.55 610.3,222.73 611.3,223.89 612.3,225.03 613.3,226.16 614.3,227.28 615.3,228.39 616.3,229.48 617.3,230.57 618.3,231.64 619.3,232.71 620.3,233.77 621.3,234.81 622.3,235.85 623.3,236.88 624.3,237.89 625.3,238.90 626.3,239.89 627.3,240.88 628.3,241.84 629.3,242.80 630.3,243.75 631.3,244.69 632.3,245.62 633.3,246.56 634.3,247.49 635.3,248.41 636.3,249.34 637.3,250.28 638.3,251.22 639.3,252.16 640.3,253.11 641.3,254.07 642.3,255.02 643.3,255.98 644.3,256.93 645.3,257.88 646.3,258.82 647.3,259.76 648.3,260.69 649.3,261.61 650.3,262.51 651.3,263.41 652.3,264.31 653.3,265.21 654.3,266.10 655.3,266.98 656.3,267.84 657.3,268.68 658.3,269.49 659.3,270.27 660.3,271.02 661.3,271.72 662.3,272.40 663.3,273.06 664.3,273.71 665.3,274.34 666.3,274.98 667.3,275.62 668.3,276.26 669.3,276.93 670.3,277.62 671.3,278.31 672.3,279.02 673.3,279.73 674.3,280.44 675.3,281.16 676.3,281.88 677.3,282.60 678.3,283.32 679.3,284.03 680.3,284.74 681.3,285.44 682.3,286.13 683.3,286.80 684.3,287.47 685.3,288.12 686.3,288.76 687.3,289.40 688.3,290.02 689.3,290.64 690.3,291.25 691.3,291.86 692.3,292.47 693.3,293.07 694.3,293.67 695.3,294.27 696.3,294.86 697.3,295.47 698.3,296.07 699.3,296.67 700.3,297.28 701.3,297.90 702.3,298.52 703.3,299.15 704.3,299.78 705.3,300.42 706.3,301.05 707.3,301.69 708.3,302.32 709.3,302.96 710.3,303.59 711.3,304.22 712.3,304.84 713.3,305.46 714.3,306.07 715.3,306.67 716.3,307.27 717.3,307.85 718.3,308.42 719.3,308.98 720.3,309.52 721.3,310.05 722.3,310.57 723.3,311.08 724.3,311.59 725.3,312.08 726.3,312.57 727.3,313.05 728.3,313.53 729.3,314.00 730.3,314.46 731.3,314.92 732.3,315.38 733.3,315.83 734.3,316.28 735.3,316.72 736.3,317.16 737.3,317.60 738.3,318.03 739.3,318.46 740.3,318.89 741.3,319.32 742.3,319.75 743.3,320.17 744.3,320.60 745.3,321.03 746.3,321.45 747.3,321.88 748.3,322.31 749.3,322.74 750.3,323.17 751.3,323.60 752.3,324.04 753.3,324.48 754.3,324.92 755.3,325.37 756.3,325.81 757.3,326.26 758.3,326.72 759.3,327.17 760.3,327.62 761.3,328.07 762.3,328.53 763.3,328.98 764.3,329.44 765.3,329.89 766.3,330.34 767.3,330.80 768.3,331.25 769.3,331.70 770.3,332.15 771.3,332.60 772.3,333.05 773.3,333.49 774.3,333.94 775.3,334.38 776.3,334.82 777.3,335.26 778.3,335.70 779.3,336.14 780.3,336.57 781.3,337.00 782.3,337.43 783.3,337.86 784.3,338.29 785.3,338.71 786.3,339.14 787.3,339.57 788.3,340.00 789.3,340.42 790.3,340.85 791.3,341.27 792.3,341.70 793.3,342.12 794.3,342.54 795.3,342.96 796.3,343.38 797.3,343.79 798.3,344.21 799.3,344.62 800.3,345.03 801.3,345.44 802.3,345.84 803.3,346.24 804.3,346.64 805.3,347.04 806.3,347.44 807.3,347.83 808.3,348.22 809.3,348.60 810.3,348.99 811.3,349.36 812.3,349.74 813.3,350.11 814.3,350.48 815.3,350.84 816.3,351.21 817.3,351.56 818.3,351.92 819.3,352.27 820.3,352.62 821.3,352.97 822.3,353.32 823.3,353.66 824.3,354.00 825.3,354.34 826.3,354.68 827.3,355.01 828.3,355.35 829.3,355.68 830.3,356.01 831.3,356.34 832.3,356.67 833.3,357.00 834.3,357.33 835.3,357.65 836.3,357.98 837.3,358.31 838.3,358.63 839.3,358.96 840.3,359.28 841.3,359.61 842.3,359.93 843.3,360.26 844.3,360.59 845.3,360.91 846.3,361.24 847.3,361.56 848.3,361.88 849.3,362.21 850.3,362.53 851.3,362.85 852.3,363.17 853.3,363.49 854.3,363.81 855.3,364.13 856.3,364.45 857.3,364.76 858.3,365.08 859.3,365.40 860.3,365.71 861.3,366.03 862.3,366.34 863.3,366.66 864.3,366.97 865.3,367.28 866.3,367.59 867.3,367.90 868.3,368.22 869.3,368.52 870.3,368.83 871.3,369.14 872.3,369.45 873.3,369.76 874.3,370.06 875.3,370.37 876.3,370.67 877.3,370.97 878.3,371.28 879.3,371.58 880.3,371.88 881.3,372.18 882.3,372.48 883.3,372.78 884.3,373.08 885.3,373.38 886.3,373.67 887.3,373.97 888.3,374.27 889.3,374.56 890.3,374.86 891.3,375.15 892.3,375.44 893.3,375.74 894.3,376.03 895.3,376.32 896.3,376.61 897.3,376.90 898.3,377.19 899.3,377.48 900.3,377.77 901.3,378.06 902.3,378.34 903.3,378.63 904.3,378.92 905.3,379.20 906.3,379.49 907.3,379.77 908.3,380.05 909.3,380.34 910.3,380.62 911.3,380.90 912.3,381.18 913.3,381.46 914.3,381.74 915.3,382.02 916.3,382.30 917.3,382.58 918.3,382.85 919.3,383.13 920.3,383.40 921.3,383.68 922.3,383.95 923.3,384.23 924.3,384.50 925.3,384.77 926.3,385.04 927.3,385.31 928.0,385.50" fill="none" stroke="#000" stroke-width="1" shape-rendering="crispEdges"/><polyline points="63.5,164.50 64.0,164.50 64.5,164.50 65.0,164.50 65.5,164.50 66.0,164.50 66.5,164.50 67.0,164.50 67.5,164.50 68.0,164.50 68.5,164.50 69.0,164.50 69.5,164.50 70.0,164.50 70.5,164.50 71.0,164.50 71.5,164.50 72.0,164.50 72.5,164.50 73.0,164.50 73.5,164.50 74.0,164.50 74.5,164.50 75.0,164.50 75.5,164.50 76.0,164.50 76.5,164.50 77.0,164.50 77.5,164.50 78.0,164.50 78.5,164.50 79.0,164.50 79.5,164.50 80.0,164.50 80.5,164.50 81.0,164.50 81.5,164.50 82.0,164.50 82.5,164.50 83.0,164.50 83.5,164.50 84.0,164.50 84.5,164.50 85.0,164.50 85.5,164.50 86.0,164.50 86.5,164.50 87.0,164.50 87.5,164.50 88.0,164.50 88.5,164.50 89.0,164.50 89.5,164.50 90.0,164.50 90.5,164.50 91.0,164.50 91.5,164.50 92.0,164.50 92.5,164.50 93.0,164.50 93.5,164.50 94.0,164.50 94.5,164.50 95.0,164.50 95.5,164.50 96.0,164.50 96.5,164.50 97.0,164.50 97.5,164.50 98.0,164.50 98.5,164.50 99.0,164.50 99.5,164.50 100.0,164.50 100.5,164.50 101.0,164.50 101.5,164.50 102.0,164.50 102.5,164.50 103.0,164.50 103.5,164.50 104.0,164.50 104.5,164.50 105.0,164.50 105.5,164.50 106.0,164.50 106.5,164.50 107.0,164.50 107.5,164.50 108.0,164.50 108.5,164.50 109.0,164.50 109.5,164.50 110.0,164.50 110.5,164.50 111.0,164.50 111.5,164.50 112.0,164.50 112.5,164.50 113.0,164.50 113.5,164.50 114.0,164.50 114.5,164.50 115.0,164.50 115.5,164.50 116.0,164.50 116.5,164.50 117.0,164.50 117.5,164.50 118.0,164.50 118.5,164.50 119.0,164.50 119.5,164.50 120.0,164.50 120.5,164.50 121.0,164.50 121.5,164.50 122.0,164.50 122.5,164.50 123.0,164.50 123.5,164.50 124.0,164.50 124.5,164.50 125.0,164.50 125.5,164.50 126.0,164.50 126.5,164.50 127.0,164.50 127.5,164.50 128.0,164.50 128.5,164.50 129.0,164.50 129.5,164.50 130.0,164.50 130.5,164.50 131.0,164.50 131.5,164.50 132.0,164.50 132.5,164.50 133.0,164.50 133.5,164.50 134.0,164.50 134.5,164.50 135.0,164.50 135.5,164.50 136.0,164.50 136.5,164.50 137.0,164.50 137.5,164.50 138.0,164.50 138.5,164.50 139.0,164.50 139.5,164.50 140.0,164.50 140.5,164.50 141.0,164.50 141.5,164.50 142.0,164.50 142.5,164.50 143.0,164.50 143.5,164.50 144.0,164.50 144.5,164.50 145.0,164.50 145.5,164.50 146.0,164.50 146.5,164.50 147.0,164.50 147.5,164.50 148.0,164.50 148.5,164.50 149.0,164.50 149.5,164.50 150.0,164.50 150.5,164.50 151.0,164.50 151.5,164.50 152.0,164.50 152.5,164.50 153.0,164.50 153.5,164.50 154.0,164.50 154.5,164.50 155.0,164.50 155.5,164.50 156.0,164.50 156.5,164.50 157.0,164.50 157.5,164.50 158.0,164.50 158.5,164.50 159.0,164.50 159.5,164.50 160.0,164.50 160.5,164.50 161.0,164.50 161.5,164.50 162.0,164.50 162.5,164.50 163.0,164.50 163.5,164.50 164.0,164.50 164.5,164.50 165.0,164.50 165.5,164.50 166.0,164.50 166.5,164.50 167.0,164.50 167.5,164.50 168.0,164.50 168.5,164.50 169.0,164.50 169.5,164.50 170.0,164.50 170.5,164.50 171.0,164.50 171.5,164.50 172.0,164.50 172.5,164.50 173.0,164.50 173.5,164.50 174.0,164.50 174.5,164.50 175.0,164.50 175.5,164.50 176.0,164.50 176.5,164.50 177.0,164.50 177.5,164.50 178.0,164.50 178.5,164.50 179.0,164.50 179.5,164.50 180.0,164.50 180.5,164.50 181.0,164.50 181.5,164.50 182.0,164.50 182.5,164.50 183.0,164.50 183.5,164.50 184.0,164.50 184.5,164.50 185.0,164.50 185.5,164.50 186.0,164.50 186.5,164.50 187.0,164.50 187.5,164.50 188.0,164.50 188.5,164.50 189.0,164.50 189.5,164.50 190.0,164.50 190.5,164.50 191.0,164.50 191.5,164.50 192.0,164.50 192.5,164.50 193.0,164.50 193.5,164.50 194.0,164.50 194.5,164.50 195.0,164.50 195.5,164.50 196.0,164.50 196.5,164.50 197.0,164.50 197.5,164.50 198.0,164.50 198.5,164.50 199.0,164.50 199.5,164.50 200.0,164.50 200.5,164.50 201.0,164.50 201.5,164.50 202.0,164.50 202.5,164.50 203.0,164.50 203.5,164.50 204.0,164.50 204.5,164.50 205.0,164.50 205.5,164.50 206.0,164.50 206.5,164.50 207.0,164.50 207.5,164.50 208.0,164.50 208.5,164.50 209.0,164.50 209.5,164.50 210.0,164.50 210.5,164.50 211.0,164.50 211.5,164.50 212.0,164.50 212.5,164.50 213.0,164.50 213.5,164.50 214.0,164.50 214.5,164.50 215.0,164.50 215.5,164.50 216.0,164.50 216.5,164.50 217.0,164.50 217.5,164.50 218.0,164.50 218.5,164.50 219.0,164.50 219.5,164.50 220.0,164.50 220.5,164.50 221.0,164.50 221.5,164.50 222.0,164.50 222.5,164.50 223.0,164.50 223.5,164.50 224.0,164.50 224.5,164.50 225.0,164.50 225.5,164.50 226.0,164.50 226.5,164.50 227.0,164.50 227.5,164.50 228.0,164.50 228.5,164.50 229.0,164.50 229.5,164.50 230.0,164.50 230.5,164.50 231.0,164.50 231.5,164.50 232.0,164.50 232.5,164.50 233.0,164.50 233.5,164.50 234.0,164.50 234.5,164.50 235.0,164.50 235.5,164.50 236.0,164.50 236.5,164.50 237.0,164.50 237.5,164.50 238.0,164.50 238.5,164.50 239.0,164.50 239.5,164.50 240.0,164.50 240.5,164.50 241.0,164.50 241.5,164.50 242.0,164.50 242.5,164.50 243.0,164.50 243.5,164.50 244.0,164.50 244.5,164.50 245.0,164.50 245.5,164.50 246.0,164.50 246.5,164.50 247.0,164.50 247.5,164.50 248.0,164.50 248.5,164.50 249.0,164.50 249.5,164.50 250.0,164.50 250.5,164.50 251.0,164.50 251.5,164.50 252.0,164.50 252.5,164.50 253.0,164.50 253.5,164.50 254.0,164.50 254.5,164.50 255.0,164.50 255.5,164.50 256.0,164.50 256.5,164.50 257.0,164.50 257.5,164.50 258.0,164.50 258.5,164.50 259.0,164.50 259.5,164.50 260.0,164.50 260.5,164.50 261.0,164.50 261.5,164.50 262.0,164.50 262.5,164.50 263.0,164.50 263.5,164.50 264.0,164.50 264.5,164.50 265.0,164.50 265.5,164.50 266.0,164.50 266.5,164.50 267.0,164.50 267.5,164.50 268.0,164.50 268.5,164.50 269.0,164.50 269.5,164.50 270.0,164.50 270.5,164.50 271.0,164.50 271.5,164.50 272.0,164.50 272.5,164.50 273.0,164.50 273.5,164.50 274.0,164.50 274.5,164.50 275.0,164.50 275.5,164.50 276.0,164.50 276.5,164.50 277.0,164.50 277.5,164.50 278.0,164.50 278.5,164.50 279.0,164.50 279.5,164.50 280.0,164.50 280.5,164.50 281.0,164.50 281.5,164.50 282.0,164.50 282.5,164.50 283.0,164.50 283.5,164.50 284.0,164.50 284.5,164.50 285.0,164.50 285.5,164.50 286.0,164.50 286.5,164.50 287.0,164.50 287.5,164.50 288.0,164.50 288.5,164.50 289.0,164.50 289.5,164.50 290.0,164.50 290.5,164.50 291.0,164.50 291.5,164.50 292.0,164.50 292.5,164.50 293.0,164.50 293.5,164.50 294.0,164.50 294.5,164.50 295.0,164.50 295.5,164.50 296.0,164.50 296.5,164.50 297.0,164.50 297.5,164.50 298.0,164.50 298.5,164.50 299.0,164.50 299.5,164.50 300.0,164.50 300.5,164.50 301.0,164.50 301.5,164.50 302.0,164.50 302.5,164.50 303.0,164.50 303.5,164.50 304.0,164.50 304.5,164.51 305.0,164.51 305.5,164.51 306.0,164.51 306.5,164.51 307.0,164.51 307.5,164.51 308.0,164.52 308.5,164.52 309.0,164.52 309.5,164.52 310.0,164.53 310.5,164.53 311.0,164.53 311.5,164.53 312.0,164.54 312.5,164.54 313.0,164.54 313.5,164.54 314.0,164.55 314.5,164.55 315.0,164.55 315.5,164.56 316.0,164.56 316.5,164.56 317.0,164.57 317.5,164.57 318.0,164.57 318.5,164.58 319.0,164.58 319.5,164.59 320.0,164.59 320.5,164.59 321.0,164.60 321.5,164.60 322.0,164.61 322.5,164.61 323.0,164.61 323.5,164.62 324.0,164.62 324.5,164.63 325.0,164.63 325.5,164.64 326.0,164.64 326.5,164.65 327.0,164.65 327.5,164.65 328.0,164.66 328.5,164.66 329.0,164.67 329.5,164.67 330.0,164.68 330.5,164.68 331.0,164.69 331.5,164.69 332.0,164.70 332.5,164.70 333.0,164.71 333.5,164.71 334.0,164.72 334.5,164.72 335.0,164.73 335.5,164.73 336.0,164.73 336.5,164.74 337.0,164.74 337.5,164.75 338.0,164.75 338.5,164.76 339.0,164.76 339.5,164.77 340.0,164.77 340.5,164.78 341.0,164.78 341.5,164.79 342.0,164.79 342.5,164.80 343.0,164.80 343.5,164.80 344.0,164.81 344.5,164.81 345.0,164.82 345.5,164.82 346.0,164.83 346.5,164.83 347.0,164.84 347.5,164.84 348.0,164.84 348.5,164.85 349.0,164.85 349.5,164.86 350.0,164.86 350.5,164.87 351.0,164.87 351.5,164.88 352.0,164.88 352.5,164.89 353.0,164.89 353.5,164.89 354.0,164.90 354.5,164.90 355.0,164.91 355.5,164.91 356.0,164.92 356.5,164.92 357.0,164.93 357.5,164.93 358.0,164.94 358.5,164.94 359.0,164.95 359.5,164.95 360.0,164.96 360.5,164.96 361.0,164.96 361.5,164.97 362.0,164.97 362.5,164.98 363.0,164.98 363.5,164.99 364.0,164.99 364.5,165.00 365.0,165.00 365.5,165.01 366.0,165.01 366.5,165.02 367.0,165.02 367.5,165.03 368.0,165.03 368.5,165.04 369.0,165.04 369.5,165.05 370.0,165.05 370.5,165.06 371.0,165.06 371.5,165.07 372.0,165.08 372.5,165.08 373.0,165.09 373.5,165.09 374.0,165.10 374.5,165.10 375.0,165.11 375.5,165.11 376.0,165.12 376.5,165.12 377.0,165.13 377.5,165.14 378.0,165.14 378.5,165.15 379.0,165.15 379.5,165.16 380.0,165.16 380.5,165.17 381.0,165.18 381.5,165.18 382.0,165.19 382.5,165.19 383.0,165.20 383.5,165.21 384.0,165.21 384.5,165.22 385.0,165.22 385.5,165.23 386.0,165.24 386.5,165.24 387.0,165.25 387.5,165.26 388.0,165.26 388.5,165.27 389.0,165.28 389.5,165.28 390.0,165.29 390.5,165.29 391.0,165.30 391.5,165.31 392.0,165.32 392.5,165.32 393.0,165.33 393.5,165.34 394.0,165.34 394.5,165.35 395.0,165.36 395.5,165.36 396.0,165.37 396.5,165.38 397.0,165.39 397.5,165.39 398.0,165.40 398.5,165.41 399.0,165.42 399.5,165.42 400.0,165.43 400.5,165.44 401.0,165.45 401.5,165.45 402.0,165.46 402.5,165.47 403.0,165.48 403.5,165.49 404.0,165.49 404.5,165.50 405.0,165.51 405.5,165.52 406.0,165.53 406.5,165.54 407.0,165.54 407.5,165.55 408.0,165.56 408.5,165.57 409.0,165.58 409.5,165.59 410.0,165.60 410.5,165.61 411.0,165.61 411.5,165.62 412.0,165.63 412.5,165.64 413.0,165.65 413.5,165.66 414.0,165.67 414.5,165.68 415.0,165.69 415.5,165.70 416.0,165.71 416.5,165.72 417.0,165.73 417.5,165.74 418.0,165.75 418.5,165.76 419.0,165.77 419.5,165.78 420.0,165.79 420.5,165.80 421.0,165.81 421.5,165.82 422.0,165.83 422.5,165.84 423.0,165.85 423.5,165.86 424.0,165.87 424.5,165.89 425.0,165.90 425.5,165.91 426.0,165.92 426.5,165.93 427.0,165.94 427.5,165.95 428.0,165.96 428.5,165.98 429.0,165.99 429.5,166.00 430.0,166.01 430.5,166.03 431.0,166.04 431.5,166.05 432.0,166.07 432.5,166.08 433.0,166.10 433.5,166.12 434.0,166.13 434.5,166.15 435.0,166.17 435.5,166.19 436.0,166.21 436.5,166.23 437.0,166.25 437.5,166.27 438.0,166.29 438.5,166.32 439.0,166.34 439.5,166.36 440.0,166.39 440.5,166.41 441.0,166.43 441.5,166.46 442.0,166.48 442.5,166.51 443.0,166.53 443.5,166.56 444.0,166.59 444.5,166.61 445.0,166.64 445.5,166.67 446.0,166.69 446.5,166.72 447.0,166.75 447.5,166.78 448.0,166.80 448.5,166.83 449.0,166.86 449.5,166.89 450.0,166.92 450.5,166.94 451.0,166.97 451.5,167.00 452.0,167.03 452.5,167.06 453.0,167.09 453.5,167.12 454.0,167.14 454.5,167.17 455.0,167.20 455.5,167.23 456.0,167.26 456.5,167.28 457.0,167.31 457.5,167.34 458.0,167.37 458.5,167.40 459.0,167.42 459.5,167.45 460.0,167.48 460.5,167.51 461.0,167.54 461.5,167.56 462.0,167.59 462.5,167.62 463.0,167.65 463.5,167.68 464.0,167.71 464.5,167.74 465.0,167.77 465.5,167.81 466.0,167.84 466.5,167.87 467.0,167.90 467.5,167.94 468.0,167.97 468.5,168.01 469.0,168.04 469.5,168.08 470.0,168.12 470.5,168.16 471.0,168.19 471.5,168.23 472.0,168.28 472.5,168.32 473.0,168.36 473.5,168.40 474.0,168.45 474.5,168.49 475.0,168.54 475.5,168.59 476.0,168.64 476.5,168.69 477.0,168.74 477.5,168.80 478.0,168.86 478.5,168.92 479.0,168.98 479.5,169.05 480.0,169.12 480.5,169.20 481.0,169.27 481.5,169.35 482.0,169.44 482.5,169.52 483.0,169.61 483.5,169.70 484.0,169.79 484.5,169.89 485.0,169.98 485.5,170.08 486.0,170.18 486.5,170.29 487.0,170.39 487.5,170.50 488.0,170.61 488.5,170.72 489.0,170.84 489.5,170.95 490.0,171.08 490.5,171.20 491.0,171.33 491.5,171.46 492.0,171.60 492.5,171.74 493.0,171.89 493.5,172.04 494.0,172.20 494.5,172.36 495.0,172.53 495.5,172.70 496.0,172.87 496.5,173.06 497.0,173.24 497.5,173.44 498.0,173.64 498.5,173.84 499.0,174.06 499.5,174.27 500.0,174.50 500.5,174.74 501.0,175.01 501.5,175.30 502.0,175.60 502.5,175.93 503.0,176.28 503.5,176.64 504.0,177.01 504.5,177.39 505.0,177.78 505.5,178.19 506.0,178.63 506.5,179.09 507.0,179.57 507.5,180.07 508.0,180.58 508.5,181.11 509.0,181.64 509.5,182.18 510.0,182.73 510.5,183.27 511.0,183.82 511.5,184.35 512.0,184.87 512.5,185.39 513.0,185.92 513.5,186.48 514.0,187.06 514.5,187.69 515.0,188.36 515.5,189.09 516.0,189.91 516.5,190.90 517.0,192.04 517.5,193.26 518.0,194.52 518.5,195.78 519.0,196.99 519.5,198.09 520.0,199.08 520.5,200.00 521.0,200.87 521.5,201.70 522.0,202.53 522.5,203.36 523.0,204.21 523.5,205.10 524.0,206.06 524.5,207.10 525.0,208.26 525.5,209.56 526.0,210.93 526.5,212.33 527.0,213.70 527.5,215.00 528.0,216.19 528.5,217.33 529.0,218.48 529.5,219.73 530.0,221.14 530.5,222.67 531.0,224.30 531.5,225.98 532.0,227.67 532.5,229.33 533.0,230.99 533.5,232.66 534.0,234.34 534.5,236.04 535.0,237.73 535.5,239.42 536.0,241.11 536.5,242.78 537.0,244.45 537.5,246.10 538.0,247.76 538.5,249.42 539.0,251.09 539.5,252.77 540.0,254.46 540.5,256.17 541.0,257.91 541.5,259.67 542.0,261.46 542.5,263.35 543.0,265.31 543.5,267.29 544.0,269.24 544.5,271.10 545.0,272.84 545.5,274.65 546.0,276.32 546.5,277.40 547.0,278.02 547.5,278.58 548.0,279.06 548.5,279.45 549.0,279.75 549.5,279.94 550.0,280.00 550.5,279.74 551.0,279.04 551.5,278.03 552.0,276.85 552.5,275.63 553.0,274.50 553.5,273.45 554.0,272.36 554.5,271.23 555.0,270.05 555.5,268.81 556.0,267.49 556.5,266.09 557.0,264.57 557.5,262.85 558.0,260.99 558.5,259.02 559.0,257.00 559.5,254.97 560.0,253.00 560.5,251.03 561.0,249.02 561.5,246.98 562.0,244.96 562.5,242.99 563.0,241.09 563.5,239.30 564.0,237.61 564.5,235.99 565.0,234.42 565.5,232.86 566.0,231.28 566.5,229.67 567.0,227.98 567.5,226.22 568.0,224.41 568.5,222.59 569.0,220.77 569.5,218.99 570.0,217.26 570.5,215.62 571.0,214.08 571.5,212.55 572.0,211.05 572.5,209.57 573.0,208.12 573.5,206.70 574.0,205.33 574.5,204.00 575.0,202.73 575.5,201.52 576.0,200.37 576.5,199.30 577.0,198.28 577.5,197.31 578.0,196.36 578.5,195.46 579.0,194.59 579.5,193.75 580.0,192.94 580.5,192.15 581.0,191.40 581.5,190.66 582.0,189.95 582.5,189.26 583.0,188.60 583.5,187.96 584.0,187.35 584.5,186.75 585.0,186.18 585.5,185.61 586.0,185.06 586.5,184.52 587.0,183.98 587.5,183.45 588.0,182.92 588.5,182.39 589.0,181.84 589.5,181.30 590.0,180.75 590.5,180.22 591.0,179.70 591.5,179.19 592.0,178.71 592.5,178.27 593.0,177.85 593.5,177.48 594.0,177.12 594.5,176.78 595.0,176.45 595.5,176.13 596.0,175.83 596.5,175.53 597.0,175.25 597.5,174.98 598.0,174.71 598.5,174.45 599.0,174.20 599.5,173.95 600.0,173.70 600.5,173.45 601.0,173.21 601.5,172.96 602.0,172.72 602.5,172.48 603.0,172.26 603.5,172.04 604.0,171.84 604.5,171.66 605.0,171.49 605.5,171.35 606.0,171.23 606.5,171.11 607.0,170.99 607.5,170.88 608.0,170.77 608.5,170.66 609.0,170.56 609.5,170.46 610.0,170.36 610.5,170.26 611.0,170.16 611.5,170.07 612.0,169.98 612.5,169.89 613.0,169.80 613.5,169.72 614.0,169.64 614.5,169.56 615.0,169.48 615.5,169.40 616.0,169.33 616.5,169.26 617.0,169.18 617.5,169.11 618.0,169.05 618.5,168.98 619.0,168.91 619.5,168.85 620.0,168.79 620.5,168.73 621.0,168.67 621.5,168.61 622.0,168.55 622.5,168.49 623.0,168.44 623.5,168.38 624.0,168.33 624.5,168.28 625.0,168.22 625.5,168.17 626.0,168.12 626.5,168.07 627.0,168.02 627.5,167.97 628.0,167.92 628.5,167.88 629.0,167.83 629.5,167.78 630.0,167.73 630.5,167.69 631.0,167.64 631.5,167.60 632.0,167.56 632.5,167.51 633.0,167.47 633.5,167.43 634.0,167.39 634.5,167.35 635.0,167.31 635.5,167.27 636.0,167.23 636.5,167.20 637.0,167.16 637.5,167.12 638.0,167.09 638.5,167.05 639.0,167.02 639.5,166.98 640.0,166.95 640.5,166.92 641.0,166.89 641.5,166.85 642.0,166.82 642.5,166.79 643.0,166.76 643.5,166.73 644.0,166.70 644.5,166.66 645.0,166.63 645.5,166.60 646.0,166.57 646.5,166.54 647.0,166.51 647.5,166.48 648.0,166.45 648.5,166.42 649.0,166.39 649.5,166.36 650.0,166.33 650.5,166.30 651.0,166.27 651.5,166.24 652.0,166.21 652.5,166.18 653.0,166.15 653.5,166.12 654.0,166.09 654.5,166.06 655.0,166.03 655.5,166.00 656.0,165.97 656.5,165.94 657.0,165.91 657.5,165.88 658.0,165.86 658.5,165.83 659.0,165.80 659.5,165.77 660.0,165.75 660.5,165.72 661.0,165.69 661.5,165.67 662.0,165.64 662.5,165.62 663.0,165.60 663.5,165.58 664.0,165.55 664.5,165.53 665.0,165.51 665.5,165.49 666.0,165.48 666.5,165.46 667.0,165.44 667.5,165.43 668.0,165.41 668.5,165.40 669.0,165.39 669.5,165.38 670.0,165.36 670.5,165.35 671.0,165.34 671.5,165.33 672.0,165.32 672.5,165.30 673.0,165.29 673.5,165.28 674.0,165.27 674.5,165.26 675.0,165.25 675.5,165.24 676.0,165.23 676.5,165.22 677.0,165.21 677.5,165.20 678.0,165.19 678.5,165.18 679.0,165.17 679.5,165.16 680.0,165.15 680.5,165.15 681.0,165.14 681.5,165.13 682.0,165.12 682.5,165.11 683.0,165.10 683.5,165.10 684.0,165.09 684.5,165.08 685.0,165.07 685.5,165.06 686.0,165.06 686.5,165.05 687.0,165.04 687.5,165.04 688.0,165.03 688.5,165.02 689.0,165.02 689.5,165.01 690.0,165.00 690.5,165.00 691.0,164.99 691.5,164.99 692.0,164.98 692.5,164.97 693.0,164.97 693.5,164.96 694.0,164.96 694.5,164.95 695.0,164.95 695.5,164.94 696.0,164.94 696.5,164.93 697.0,164.93 697.5,164.92 698.0,164.92 698.5,164.91 699.0,164.91 699.5,164.90 700.0,164.90 700.5,164.90 701.0,164.89 701.5,164.89 702.0,164.88 702.5,164.88 703.0,164.88 703.5,164.87 704.0,164.87 704.5,164.86 705.0,164.86 705.5,164.86 706.0,164.85 706.5,164.85 707.0,164.84 707.5,164.84 708.0,164.84 708.5,164.83 709.0,164.83 709.5,164.82 710.0,164.82 710.5,164.82 711.0,164.81 711.5,164.81 712.0,164.81 712.5,164.80 713.0,164.80 713.5,164.79 714.0,164.79 714.5,164.79 715.0,164.78 715.5,164.78 716.0,164.78 716.5,164.77 717.0,164.77 717.5,164.77 718.0,164.76 718.5,164.76 719.0,164.76 719.5,164.75 720.0,164.75 720.5,164.75 721.0,164.74 721.5,164.74 722.0,164.74 722.5,164.73 723.0,164.73 723.5,164.73 724.0,164.73 724.5,164.72 725.0,164.72 725.5,164.72 726.0,164.71 726.5,164.71 727.0,164.71 727.5,164.70 728.0,164.70 728.5,164.70 729.0,164.70 729.5,164.69 730.0,164.69 730.5,164.69 731.0,164.69 731.5,164.68 732.0,164.68 732.5,164.68 733.0,164.68 733.5,164.67 734.0,164.67 734.5,164.67 735.0,164.67 735.5,164.66 736.0,164.66 736.5,164.66 737.0,164.66 737.5,164.65 738.0,164.65 738.5,164.65 739.0,164.65 739.5,164.65 740.0,164.64 740.5,164.64 741.0,164.64 741.5,164.64 742.0,164.64 742.5,164.63 743.0,164.63 743.5,164.63 744.0,164.63 744.5,164.63 745.0,164.63 745.5,164.62 746.0,164.62 746.5,164.62 747.0,164.62 747.5,164.62 748.0,164.62 748.5,164.62 749.0,164.61 749.5,164.61 750.0,164.61 750.5,164.61 751.0,164.61 751.5,164.61 752.0,164.61 752.5,164.61 753.0,164.61 753.5,164.60 754.0,164.60 754.5,164.60 755.0,164.60 755.5,164.60 756.0,164.60 756.5,164.60 757.0,164.60 757.5,164.60 758.0,164.60 758.5,164.60 759.0,164.60 759.5,164.60 760.0,164.60 760.5,164.60 761.0,164.59 761.5,164.59 762.0,164.59 762.5,164.59 763.0,164.59 763.5,164.59 764.0,164.59 764.5,164.59 765.0,164.59 765.5,164.59 766.0,164.59 766.5,164.59 767.0,164.59 767.5,164.59 768.0,164.59 768.5,164.59 769.0,164.59 769.5,164.59 770.0,164.58 770.5,164.58 771.0,164.58 771.5,164.58 772.0,164.58 772.5,164.58 773.0,164.58 773.5,164.58 774.0,164.58 774.5,164.58 775.0,164.58 775.5,164.58 776.0,164.58 776.5,164.58 777.0,164.58 777.5,164.58 778.0,164.58 778.5,164.58 779.0,164.57 779.5,164.57 780.0,164.57 780.5,164.57 781.0,164.57 781.5,164.57 782.0,164.57 782.5,164.57 783.0,164.57 783.5,164.57 784.0,164.57 784.5,164.57 785.0,164.57 785.5,164.57 786.0,164.57 786.5,164.57 787.0,164.57 787.5,164.57 788.0,164.57 788.5,164.57 789.0,164.56 789.5,164.56 790.0,164.56 790.5,164.56 791.0,164.56 791.5,164.56 792.0,164.56 792.5,164.56 793.0,164.56 793.5,164.56 794.0,164.56 794.5,164.56 795.0,164.56 795.5,164.56 796.0,164.56 796.5,164.56 797.0,164.56 797.5,164.56 798.0,164.56 798.5,164.56 799.0,164.56 799.5,164.56 800.0,164.55 800.5,164.55 801.0,164.55 801.5,164.55 802.0,164.55 802.5,164.55 803.0,164.55 803.5,164.55 804.0,164.55 804.5,164.55 805.0,164.55 805.5,164.55 806.0,164.55 806.5,164.55 807.0,164.55 807.5,164.55 808.0,164.55 808.5,164.55 809.0,164.55 809.5,164.55 810.0,164.55 810.5,164.55 811.0,164.55 811.5,164.55 812.0,164.54 812.5,164.54 813.0,164.54 813.5,164.54 814.0,164.54 814.5,164.54 815.0,164.54 815.5,164.54 816.0,164.54 816.5,164.54 817.0,164.54 817.5,164.54 818.0,164.54 818.5,164.54 819.0,164.54 819.5,164.54 820.0,164.54 820.5,164.54 821.0,164.54 821.5,164.54 822.0,164.54 822.5,164.54 823.0,164.54 823.5,164.54 824.0,164.54 824.5,164.54 825.0,164.54 825.5,164.53 826.0,164.53 826.5,164.53 827.0,164.53 827.5,164.53 828.0,164.53 828.5,164.53 829.0,164.53 829.5,164.53 830.0,164.53 830.5,164.53 831.0,164.53 831.5,164.53 832.0,164.53 832.5,164.53 833.0,164.53 833.5,164.53 834.0,164.53 834.5,164.53 835.0,164.53 835.5,164.53 836.0,164.53 836.5,164.53 837.0,164.53 837.5,164.53 838.0,164.53 838.5,164.53 839.0,164.53 839.5,164.53 840.0,164.53 840.5,164.53 841.0,164.52 841.5,164.52 842.0,164.52 842.5,164.52 843.0,164.52 843.5,164.52 844.0,164.52 844.5,164.52 845.0,164.52 845.5,164.52 846.0,164.52 846.5,164.52 847.0,164.52 847.5,164.52 848.0,164.52 848.5,164.52 849.0,164.52 849.5,164.52 850.0,164.52 850.5,164.52 851.0,164.52 851.5,164.52 852.0,164.52 852.5,164.52 853.0,164.52 853.5,164.52 854.0,164.52 854.5,164.52 855.0,164.52 855.5,164.52 856.0,164.52 856.5,164.52 857.0,164.52 857.5,164.52 858.0,164.52 858.5,164.52 859.0,164.52 859.5,164.52 860.0,164.52 860.5,164.51 861.0,164.51 861.5,164.51 862.0,164.51 862.5,164.51 863.0,164.51 863.5,164.51 864.0,164.51 864.5,164.51 865.0,164.51 865.5,164.51 866.0,164.51 866.5,164.51 867.0,164.51 867.5,164.51 868.0,164.51 868.5,164.51 869.0,164.51 869.5,164.51 870.0,164.51 870.5,164.51 871.0,164.51 871.5,164.51 872.0,164.51 872.5,164.51 873.0,164.51 873.5,164.51 874.0,164.51 874.5,164.51 875.0,164.51 875.5,164.51 876.0,164.51 876.5,164.51 877.0,164.51 877.5,164.51 878.0,164.51 878.5,164.51 879.0,164.51 879.5,164.51 880.0,164.51 880.5,164.51 881.0,164.51 881.5,164.51 882.0,164.51 882.5,164.51 883.0,164.51 883.5,164.51 884.0,164.51 884.5,164.51 885.0,164.51 885.5,164.51 886.0,164.51 886.5,164.51 887.0,164.51 887.5,164.51 888.0,164.51 888.5,164.50 889.0,164.50 889.5,164.50 890.0,164.50 890.5,164.50 891.0,164.50 891.5,164.50 892.0,164.50 892.5,164.50 893.0,164.50 893.5,164.50 894.0,164.50 894.5,164.50 895.0,164.50 895.5,164.50 896.0,164.50 896.5,164.50 897.0,164.50 897.5,164.50 898.0,164.50 898.5,164.50 899.0,164.50 899.5,164.50 900.0,164.50 900.5,164.50 901.0,164.50 901.5,164.50 902.0,164.50 902.5,164.50 903.0,164.50 903.5,164.50 904.0,164.50 904.5,164.50 905.0,164.50 905.5,164.50 906.0,164.50 906.5,164.50 907.0,164.50 907.5,164.50 908.0,164.50 908.5,164.50 909.0,164.50 909.5,164.50 910.0,164.50 910.5,164.50 911.0,164.50 911.5,164.50 912.0,164.50 912.5,164.50 913.0,164.50 913.5,164.50 914.0,164.50 914.5,164.50 915.0,164.50 915.5,164.50 916.0,164.50 916.5,164.50 917.0,164.50 917.5,164.50 918.0,164.50 918.5,164.50 919.0,164.50 919.5,164.50 920.0,164.50 920.5,164.50 921.0,164.50 921.5,164.50 922.0,164.50 922.5,164.50 923.0,164.50 923.5,164.50 924.0,164.50 924.5,164.50 925.0,164.50 925.5,164.50 926.0,164.50 926.5,164.50 927.0,164.50 927.5,164.50 928.0,164.50" fill="none" stroke="#0000ff" stroke-width="1" shape-rendering="crispEdges"/></g></svg>
<svg class="a" style="left:0;top:0" width="1019" height="800" shape-rendering="crispEdges"><defs><clipPath id="sc"><rect x="13" y="478" width="993" height="289"/></clipPath></defs><g clip-path="url(#sc)"><path d="M23 484h1v1h-1zM23 499h1v1h-1zM23 514h1v1h-1zM23 529h1v1h-1zM23 544h1v1h-1zM23 560h1v1h-1zM23 575h1v1h-1zM23 590h1v1h-1zM23 605h1v1h-1zM23 620h1v1h-1zM23 635h1v1h-1zM23 650h1v1h-1zM23 665h1v1h-1zM23 680h1v1h-1zM23 695h1v1h-1zM23 710h1v1h-1zM23 725h1v1h-1zM23 740h1v1h-1zM23 756h1v1h-1zM38 484h1v1h-1zM38 499h1v1h-1zM38 514h1v1h-1zM38 529h1v1h-1zM38 544h1v1h-1zM38 560h1v1h-1zM38 575h1v1h-1zM38 590h1v1h-1zM38 605h1v1h-1zM38 620h1v1h-1zM38 635h1v1h-1zM38 650h1v1h-1zM38 665h1v1h-1zM38 680h1v1h-1zM38 695h1v1h-1zM38 710h1v1h-1zM38 725h1v1h-1zM38 740h1v1h-1zM38 756h1v1h-1zM53 484h1v1h-1zM53 499h1v1h-1zM53 514h1v1h-1zM53 529h1v1h-1zM53 544h1v1h-1zM53 560h1v1h-1zM53 575h1v1h-1zM53 590h1v1h-1zM53 605h1v1h-1zM53 620h1v1h-1zM53 635h1v1h-1zM53 650h1v1h-1zM53 665h1v1h-1zM53 680h1v1h-1zM53 695h1v1h-1zM53 710h1v1h-1zM53 725h1v1h-1zM53 740h1v1h-1zM53 756h1v1h-1zM68 484h1v1h-1zM68 499h1v1h-1zM68 514h1v1h-1zM68 529h1v1h-1zM68 544h1v1h-1zM68 560h1v1h-1zM68 575h1v1h-1zM68 590h1v1h-1zM68 605h1v1h-1zM68 620h1v1h-1zM68 635h1v1h-1zM68 650h1v1h-1zM68 665h1v1h-1zM68 680h1v1h-1zM68 695h1v1h-1zM68 710h1v1h-1zM68 725h1v1h-1zM68 740h1v1h-1zM68 756h1v1h-1zM83 484h1v1h-1zM83 499h1v1h-1zM83 514h1v1h-1zM83 529h1v1h-1zM83 544h1v1h-1zM83 560h1v1h-1zM83 575h1v1h-1zM83 590h1v1h-1zM83 605h1v1h-1zM83 620h1v1h-1zM83 635h1v1h-1zM83 650h1v1h-1zM83 665h1v1h-1zM83 680h1v1h-1zM83 695h1v1h-1zM83 710h1v1h-1zM83 725h1v1h-1zM83 740h1v1h-1zM83 756h1v1h-1zM98 484h1v1h-1zM98 499h1v1h-1zM98 514h1v1h-1zM98 529h1v1h-1zM98 544h1v1h-1zM98 560h1v1h-1zM98 575h1v1h-1zM98 590h1v1h-1zM98 605h1v1h-1zM98 620h1v1h-1zM98 635h1v1h-1zM98 650h1v1h-1zM98 665h1v1h-1zM98 680h1v1h-1zM98 695h1v1h-1zM98 710h1v1h-1zM98 725h1v1h-1zM98 740h1v1h-1zM98 756h1v1h-1zM113 484h1v1h-1zM113 499h1v1h-1zM113 514h1v1h-1zM113 529h1v1h-1zM113 544h1v1h-1zM113 560h1v1h-1zM113 575h1v1h-1zM113 590h1v1h-1zM113 605h1v1h-1zM113 620h1v1h-1zM113 635h1v1h-1zM113 650h1v1h-1zM113 665h1v1h-1zM113 680h1v1h-1zM113 695h1v1h-1zM113 710h1v1h-1zM113 725h1v1h-1zM113 740h1v1h-1zM113 756h1v1h-1zM128 484h1v1h-1zM128 499h1v1h-1zM128 514h1v1h-1zM128 529h1v1h-1zM128 544h1v1h-1zM128 560h1v1h-1zM128 575h1v1h-1zM128 590h1v1h-1zM128 605h1v1h-1zM128 620h1v1h-1zM128 635h1v1h-1zM128 650h1v1h-1zM128 665h1v1h-1zM128 680h1v1h-1zM128 695h1v1h-1zM128 710h1v1h-1zM128 725h1v1h-1zM128 740h1v1h-1zM128 756h1v1h-1zM144 484h1v1h-1zM144 499h1v1h-1zM144 514h1v1h-1zM144 529h1v1h-1zM144 544h1v1h-1zM144 560h1v1h-1zM144 575h1v1h-1zM144 590h1v1h-1zM144 605h1v1h-1zM144 620h1v1h-1zM144 635h1v1h-1zM144 650h1v1h-1zM144 665h1v1h-1zM144 680h1v1h-1zM144 695h1v1h-1zM144 710h1v1h-1zM144 725h1v1h-1zM144 740h1v1h-1zM144 756h1v1h-1zM159 484h1v1h-1zM159 499h1v1h-1zM159 514h1v1h-1zM159 529h1v1h-1zM159 544h1v1h-1zM159 560h1v1h-1zM159 575h1v1h-1zM159 590h1v1h-1zM159 605h1v1h-1zM159 620h1v1h-1zM159 635h1v1h-1zM159 650h1v1h-1zM159 665h1v1h-1zM159 680h1v1h-1zM159 695h1v1h-1zM159 710h1v1h-1zM159 725h1v1h-1zM159 740h1v1h-1zM159 756h1v1h-1zM174 484h1v1h-1zM174 499h1v1h-1zM174 514h1v1h-1zM174 529h1v1h-1zM174 544h1v1h-1zM174 560h1v1h-1zM174 575h1v1h-1zM174 590h1v1h-1zM174 605h1v1h-1zM174 620h1v1h-1zM174 635h1v1h-1zM174 650h1v1h-1zM174 665h1v1h-1zM174 680h1v1h-1zM174 695h1v1h-1zM174 710h1v1h-1zM174 725h1v1h-1zM174 740h1v1h-1zM174 756h1v1h-1zM189 484h1v1h-1zM189 499h1v1h-1zM189 514h1v1h-1zM189 529h1v1h-1zM189 544h1v1h-1zM189 560h1v1h-1zM189 575h1v1h-1zM189 590h1v1h-1zM189 605h1v1h-1zM189 620h1v1h-1zM189 635h1v1h-1zM189 650h1v1h-1zM189 665h1v1h-1zM189 680h1v1h-1zM189 695h1v1h-1zM189 710h1v1h-1zM189 725h1v1h-1zM189 740h1v1h-1zM189 756h1v1h-1zM204 484h1v1h-1zM204 499h1v1h-1zM204 514h1v1h-1zM204 529h1v1h-1zM204 544h1v1h-1zM204 560h1v1h-1zM204 575h1v1h-1zM204 590h1v1h-1zM204 605h1v1h-1zM204 620h1v1h-1zM204 635h1v1h-1zM204 650h1v1h-1zM204 665h1v1h-1zM204 680h1v1h-1zM204 695h1v1h-1zM204 710h1v1h-1zM204 725h1v1h-1zM204 740h1v1h-1zM204 756h1v1h-1zM219 484h1v1h-1zM219 499h1v1h-1zM219 514h1v1h-1zM219 529h1v1h-1zM219 544h1v1h-1zM219 560h1v1h-1zM219 575h1v1h-1zM219 590h1v1h-1zM219 605h1v1h-1zM219 620h1v1h-1zM219 635h1v1h-1zM219 650h1v1h-1zM219 665h1v1h-1zM219 680h1v1h-1zM219 695h1v1h-1zM219 710h1v1h-1zM219 725h1v1h-1zM219 740h1v1h-1zM219 756h1v1h-1zM234 484h1v1h-1zM234 499h1v1h-1zM234 514h1v1h-1zM234 529h1v1h-1zM234 544h1v1h-1zM234 560h1v1h-1zM234 575h1v1h-1zM234 590h1v1h-1zM234 605h1v1h-1zM234 620h1v1h-1zM234 635h1v1h-1zM234 650h1v1h-1zM234 665h1v1h-1zM234 680h1v1h-1zM234 695h1v1h-1zM234 710h1v1h-1zM234 725h1v1h-1zM234 740h1v1h-1zM234 756h1v1h-1zM249 484h1v1h-1zM249 499h1v1h-1zM249 514h1v1h-1zM249 529h1v1h-1zM249 544h1v1h-1zM249 560h1v1h-1zM249 575h1v1h-1zM249 590h1v1h-1zM249 605h1v1h-1zM249 620h1v1h-1zM249 635h1v1h-1zM249 650h1v1h-1zM249 665h1v1h-1zM249 680h1v1h-1zM249 695h1v1h-1zM249 710h1v1h-1zM249 725h1v1h-1zM249 740h1v1h-1zM249 756h1v1h-1zM264 484h1v1h-1zM264 499h1v1h-1zM264 514h1v1h-1zM264 529h1v1h-1zM264 544h1v1h-1zM264 560h1v1h-1zM264 575h1v1h-1zM264 590h1v1h-1zM264 605h1v1h-1zM264 620h1v1h-1zM264 635h1v1h-1zM264 650h1v1h-1zM264 665h1v1h-1zM264 680h1v1h-1zM264 695h1v1h-1zM264 710h1v1h-1zM264 725h1v1h-1zM264 740h1v1h-1zM264 756h1v1h-1zM279 484h1v1h-1zM279 499h1v1h-1zM279 514h1v1h-1zM279 529h1v1h-1zM279 544h1v1h-1zM279 560h1v1h-1zM279 575h1v1h-1zM279 590h1v1h-1zM279 605h1v1h-1zM279 620h1v1h-1zM279 635h1v1h-1zM279 650h1v1h-1zM279 665h1v1h-1zM279 680h1v1h-1zM279 695h1v1h-1zM279 710h1v1h-1zM279 725h1v1h-1zM279 740h1v1h-1zM279 756h1v1h-1zM294 484h1v1h-1zM294 499h1v1h-1zM294 514h1v1h-1zM294 529h1v1h-1zM294 544h1v1h-1zM294 560h1v1h-1zM294 575h1v1h-1zM294 590h1v1h-1zM294 605h1v1h-1zM294 620h1v1h-1zM294 635h1v1h-1zM294 650h1v1h-1zM294 665h1v1h-1zM294 680h1v1h-1zM294 695h1v1h-1zM294 710h1v1h-1zM294 725h1v1h-1zM294 740h1v1h-1zM294 756h1v1h-1zM309 484h1v1h-1zM309 499h1v1h-1zM309 514h1v1h-1zM309 529h1v1h-1zM309 544h1v1h-1zM309 560h1v1h-1zM309 575h1v1h-1zM309 590h1v1h-1zM309 605h1v1h-1zM309 620h1v1h-1zM309 635h1v1h-1zM309 650h1v1h-1zM309 665h1v1h-1zM309 680h1v1h-1zM309 695h1v1h-1zM309 710h1v1h-1zM309 725h1v1h-1zM309 740h1v1h-1zM309 756h1v1h-1zM324 484h1v1h-1zM324 499h1v1h-1zM324 514h1v1h-1zM324 529h1v1h-1zM324 544h1v1h-1zM324 560h1v1h-1zM324 575h1v1h-1zM324 590h1v1h-1zM324 605h1v1h-1zM324 620h1v1h-1zM324 635h1v1h-1zM324 650h1v1h-1zM324 665h1v1h-1zM324 680h1v1h-1zM324 695h1v1h-1zM324 710h1v1h-1zM324 725h1v1h-1zM324 740h1v1h-1zM324 756h1v1h-1zM340 484h1v1h-1zM340 499h1v1h-1zM340 514h1v1h-1zM340 529h1v1h-1zM340 544h1v1h-1zM340 560h1v1h-1zM340 575h1v1h-1zM340 590h1v1h-1zM340 605h1v1h-1zM340 620h1v1h-1zM340 635h1v1h-1zM340 650h1v1h-1zM340 665h1v1h-1zM340 680h1v1h-1zM340 695h1v1h-1zM340 710h1v1h-1zM340 725h1v1h-1zM340 740h1v1h-1zM340 756h1v1h-1zM355 484h1v1h-1zM355 499h1v1h-1zM355 514h1v1h-1zM355 529h1v1h-1zM355 544h1v1h-1zM355 560h1v1h-1zM355 575h1v1h-1zM355 590h1v1h-1zM355 605h1v1h-1zM355 620h1v1h-1zM355 635h1v1h-1zM355 650h1v1h-1zM355 665h1v1h-1zM355 680h1v1h-1zM355 695h1v1h-1zM355 710h1v1h-1zM355 725h1v1h-1zM355 740h1v1h-1zM355 756h1v1h-1zM370 484h1v1h-1zM370 499h1v1h-1zM370 514h1v1h-1zM370 529h1v1h-1zM370 544h1v1h-1zM370 560h1v1h-1zM370 575h1v1h-1zM370 590h1v1h-1zM370 605h1v1h-1zM370 620h1v1h-1zM370 635h1v1h-1zM370 650h1v1h-1zM370 665h1v1h-1zM370 680h1v1h-1zM370 695h1v1h-1zM370 710h1v1h-1zM370 725h1v1h-1zM370 740h1v1h-1zM370 756h1v1h-1zM385 484h1v1h-1zM385 499h1v1h-1zM385 514h1v1h-1zM385 529h1v1h-1zM385 544h1v1h-1zM385 560h1v1h-1zM385 575h1v1h-1zM385 590h1v1h-1zM385 605h1v1h-1zM385 620h1v1h-1zM385 635h1v1h-1zM385 650h1v1h-1zM385 665h1v1h-1zM385 680h1v1h-1zM385 695h1v1h-1zM385 710h1v1h-1zM385 725h1v1h-1zM385 740h1v1h-1zM385 756h1v1h-1zM400 484h1v1h-1zM400 499h1v1h-1zM400 514h1v1h-1zM400 529h1v1h-1zM400 544h1v1h-1zM400 560h1v1h-1zM400 575h1v1h-1zM400 590h1v1h-1zM400 605h1v1h-1zM400 620h1v1h-1zM400 635h1v1h-1zM400 650h1v1h-1zM400 665h1v1h-1zM400 680h1v1h-1zM400 695h1v1h-1zM400 710h1v1h-1zM400 725h1v1h-1zM400 740h1v1h-1zM400 756h1v1h-1zM415 484h1v1h-1zM415 499h1v1h-1zM415 514h1v1h-1zM415 529h1v1h-1zM415 544h1v1h-1zM415 560h1v1h-1zM415 575h1v1h-1zM415 590h1v1h-1zM415 605h1v1h-1zM415 620h1v1h-1zM415 635h1v1h-1zM415 650h1v1h-1zM415 665h1v1h-1zM415 680h1v1h-1zM415 695h1v1h-1zM415 710h1v1h-1zM415 725h1v1h-1zM415 740h1v1h-1zM415 756h1v1h-1zM430 484h1v1h-1zM430 499h1v1h-1zM430 514h1v1h-1zM430 529h1v1h-1zM430 544h1v1h-1zM430 560h1v1h-1zM430 575h1v1h-1zM430 590h1v1h-1zM430 605h1v1h-1zM430 620h1v1h-1zM430 635h1v1h-1zM430 650h1v1h-1zM430 665h1v1h-1zM430 680h1v1h-1zM430 695h1v1h-1zM430 710h1v1h-1zM430 725h1v1h-1zM430 740h1v1h-1zM430 756h1v1h-1zM445 484h1v1h-1zM445 499h1v1h-1zM445 514h1v1h-1zM445 529h1v1h-1zM445 544h1v1h-1zM445 560h1v1h-1zM445 575h1v1h-1zM445 590h1v1h-1zM445 605h1v1h-1zM445 620h1v1h-1zM445 635h1v1h-1zM445 650h1v1h-1zM445 665h1v1h-1zM445 680h1v1h-1zM445 695h1v1h-1zM445 710h1v1h-1zM445 725h1v1h-1zM445 740h1v1h-1zM445 756h1v1h-1zM460 484h1v1h-1zM460 499h1v1h-1zM460 514h1v1h-1zM460 529h1v1h-1zM460 544h1v1h-1zM460 560h1v1h-1zM460 575h1v1h-1zM460 590h1v1h-1zM460 605h1v1h-1zM460 620h1v1h-1zM460 635h1v1h-1zM460 650h1v1h-1zM460 665h1v1h-1zM460 680h1v1h-1zM460 695h1v1h-1zM460 710h1v1h-1zM460 725h1v1h-1zM460 740h1v1h-1zM460 756h1v1h-1zM475 484h1v1h-1zM475 499h1v1h-1zM475 514h1v1h-1zM475 529h1v1h-1zM475 544h1v1h-1zM475 560h1v1h-1zM475 575h1v1h-1zM475 590h1v1h-1zM475 605h1v1h-1zM475 620h1v1h-1zM475 635h1v1h-1zM475 650h1v1h-1zM475 665h1v1h-1zM475 680h1v1h-1zM475 695h1v1h-1zM475 710h1v1h-1zM475 725h1v1h-1zM475 740h1v1h-1zM475 756h1v1h-1zM490 484h1v1h-1zM490 499h1v1h-1zM490 514h1v1h-1zM490 529h1v1h-1zM490 544h1v1h-1zM490 560h1v1h-1zM490 575h1v1h-1zM490 590h1v1h-1zM490 605h1v1h-1zM490 620h1v1h-1zM490 635h1v1h-1zM490 650h1v1h-1zM490 665h1v1h-1zM490 680h1v1h-1zM490 695h1v1h-1zM490 710h1v1h-1zM490 725h1v1h-1zM490 740h1v1h-1zM490 756h1v1h-1zM505 484h1v1h-1zM505 499h1v1h-1zM505 514h1v1h-1zM505 529h1v1h-1zM505 544h1v1h-1zM505 560h1v1h-1zM505 575h1v1h-1zM505 590h1v1h-1zM505 605h1v1h-1zM505 620h1v1h-1zM505 635h1v1h-1zM505 650h1v1h-1zM505 665h1v1h-1zM505 680h1v1h-1zM505 695h1v1h-1zM505 710h1v1h-1zM505 725h1v1h-1zM505 740h1v1h-1zM505 756h1v1h-1zM520 484h1v1h-1zM520 499h1v1h-1zM520 514h1v1h-1zM520 529h1v1h-1zM520 544h1v1h-1zM520 560h1v1h-1zM520 575h1v1h-1zM520 590h1v1h-1zM520 605h1v1h-1zM520 620h1v1h-1zM520 635h1v1h-1zM520 650h1v1h-1zM520 665h1v1h-1zM520 680h1v1h-1zM520 695h1v1h-1zM520 710h1v1h-1zM520 725h1v1h-1zM520 740h1v1h-1zM520 756h1v1h-1zM536 484h1v1h-1zM536 499h1v1h-1zM536 514h1v1h-1zM536 529h1v1h-1zM536 544h1v1h-1zM536 560h1v1h-1zM536 575h1v1h-1zM536 590h1v1h-1zM536 605h1v1h-1zM536 620h1v1h-1zM536 635h1v1h-1zM536 650h1v1h-1zM536 665h1v1h-1zM536 680h1v1h-1zM536 695h1v1h-1zM536 710h1v1h-1zM536 725h1v1h-1zM536 740h1v1h-1zM536 756h1v1h-1zM551 484h1v1h-1zM551 499h1v1h-1zM551 514h1v1h-1zM551 529h1v1h-1zM551 544h1v1h-1zM551 560h1v1h-1zM551 575h1v1h-1zM551 590h1v1h-1zM551 605h1v1h-1zM551 620h1v1h-1zM551 635h1v1h-1zM551 650h1v1h-1zM551 665h1v1h-1zM551 680h1v1h-1zM551 695h1v1h-1zM551 710h1v1h-1zM551 725h1v1h-1zM551 740h1v1h-1zM551 756h1v1h-1zM566 484h1v1h-1zM566 499h1v1h-1zM566 514h1v1h-1zM566 529h1v1h-1zM566 544h1v1h-1zM566 560h1v1h-1zM566 575h1v1h-1zM566 590h1v1h-1zM566 605h1v1h-1zM566 620h1v1h-1zM566 635h1v1h-1zM566 650h1v1h-1zM566 665h1v1h-1zM566 680h1v1h-1zM566 695h1v1h-1zM566 710h1v1h-1zM566 725h1v1h-1zM566 740h1v1h-1zM566 756h1v1h-1zM581 484h1v1h-1zM581 499h1v1h-1zM581 514h1v1h-1zM581 529h1v1h-1zM581 544h1v1h-1zM581 560h1v1h-1zM581 575h1v1h-1zM581 590h1v1h-1zM581 605h1v1h-1zM581 620h1v1h-1zM581 635h1v1h-1zM581 650h1v1h-1zM581 665h1v1h-1zM581 680h1v1h-1zM581 695h1v1h-1zM581 710h1v1h-1zM581 725h1v1h-1zM581 740h1v1h-1zM581 756h1v1h-1zM596 484h1v1h-1zM596 499h1v1h-1zM596 514h1v1h-1zM596 529h1v1h-1zM596 544h1v1h-1zM596 560h1v1h-1zM596 575h1v1h-1zM596 590h1v1h-1zM596 605h1v1h-1zM596 620h1v1h-1zM596 635h1v1h-1zM596 650h1v1h-1zM596 665h1v1h-1zM596 680h1v1h-1zM596 695h1v1h-1zM596 710h1v1h-1zM596 725h1v1h-1zM596 740h1v1h-1zM596 756h1v1h-1zM611 484h1v1h-1zM611 499h1v1h-1zM611 514h1v1h-1zM611 529h1v1h-1zM611 544h1v1h-1zM611 560h1v1h-1zM611 575h1v1h-1zM611 590h1v1h-1zM611 605h1v1h-1zM611 620h1v1h-1zM611 635h1v1h-1zM611 650h1v1h-1zM611 665h1v1h-1zM611 680h1v1h-1zM611 695h1v1h-1zM611 710h1v1h-1zM611 725h1v1h-1zM611 740h1v1h-1zM611 756h1v1h-1zM626 484h1v1h-1zM626 499h1v1h-1zM626 514h1v1h-1zM626 529h1v1h-1zM626 544h1v1h-1zM626 560h1v1h-1zM626 575h1v1h-1zM626 590h1v1h-1zM626 605h1v1h-1zM626 620h1v1h-1zM626 635h1v1h-1zM626 650h1v1h-1zM626 665h1v1h-1zM626 680h1v1h-1zM626 695h1v1h-1zM626 710h1v1h-1zM626 725h1v1h-1zM626 740h1v1h-1zM626 756h1v1h-1zM641 484h1v1h-1zM641 499h1v1h-1zM641 514h1v1h-1zM641 529h1v1h-1zM641 544h1v1h-1zM641 560h1v1h-1zM641 575h1v1h-1zM641 590h1v1h-1zM641 605h1v1h-1zM641 620h1v1h-1zM641 635h1v1h-1zM641 650h1v1h-1zM641 665h1v1h-1zM641 680h1v1h-1zM641 695h1v1h-1zM641 710h1v1h-1zM641 725h1v1h-1zM641 740h1v1h-1zM641 756h1v1h-1zM656 484h1v1h-1zM656 499h1v1h-1zM656 514h1v1h-1zM656 529h1v1h-1zM656 544h1v1h-1zM656 560h1v1h-1zM656 575h1v1h-1zM656 590h1v1h-1zM656 605h1v1h-1zM656 620h1v1h-1zM656 635h1v1h-1zM656 650h1v1h-1zM656 665h1v1h-1zM656 680h1v1h-1zM656 695h1v1h-1zM656 710h1v1h-1zM656 725h1v1h-1zM656 740h1v1h-1zM656 756h1v1h-1zM671 484h1v1h-1zM671 499h1v1h-1zM671 514h1v1h-1zM671 529h1v1h-1zM671 544h1v1h-1zM671 560h1v1h-1zM671 575h1v1h-1zM671 590h1v1h-1zM671 605h1v1h-1zM671 620h1v1h-1zM671 635h1v1h-1zM671 650h1v1h-1zM671 665h1v1h-1zM671 680h1v1h-1zM671 695h1v1h-1zM671 710h1v1h-1zM671 725h1v1h-1zM671 740h1v1h-1zM671 756h1v1h-1zM686 484h1v1h-1zM686 499h1v1h-1zM686 514h1v1h-1zM686 529h1v1h-1zM686 544h1v1h-1zM686 560h1v1h-1zM686 575h1v1h-1zM686 590h1v1h-1zM686 605h1v1h-1zM686 620h1v1h-1zM686 635h1v1h-1zM686 650h1v1h-1zM686 665h1v1h-1zM686 680h1v1h-1zM686 695h1v1h-1zM686 710h1v1h-1zM686 725h1v1h-1zM686 740h1v1h-1zM686 756h1v1h-1zM701 484h1v1h-1zM701 499h1v1h-1zM701 514h1v1h-1zM701 529h1v1h-1zM701 544h1v1h-1zM701 560h1v1h-1zM701 575h1v1h-1zM701 590h1v1h-1zM701 605h1v1h-1zM701 620h1v1h-1zM701 635h1v1h-1zM701 650h1v1h-1zM701 665h1v1h-1zM701 680h1v1h-1zM701 695h1v1h-1zM701 710h1v1h-1zM701 725h1v1h-1zM701 740h1v1h-1zM701 756h1v1h-1zM716 484h1v1h-1zM716 499h1v1h-1zM716 514h1v1h-1zM716 529h1v1h-1zM716 544h1v1h-1zM716 560h1v1h-1zM716 575h1v1h-1zM716 590h1v1h-1zM716 605h1v1h-1zM716 620h1v1h-1zM716 635h1v1h-1zM716 650h1v1h-1zM716 665h1v1h-1zM716 680h1v1h-1zM716 695h1v1h-1zM716 710h1v1h-1zM716 725h1v1h-1zM716 740h1v1h-1zM716 756h1v1h-1zM732 484h1v1h-1zM732 499h1v1h-1zM732 514h1v1h-1zM732 529h1v1h-1zM732 544h1v1h-1zM732 560h1v1h-1zM732 575h1v1h-1zM732 590h1v1h-1zM732 605h1v1h-1zM732 620h1v1h-1zM732 635h1v1h-1zM732 650h1v1h-1zM732 665h1v1h-1zM732 680h1v1h-1zM732 695h1v1h-1zM732 710h1v1h-1zM732 725h1v1h-1zM732 740h1v1h-1zM732 756h1v1h-1zM747 484h1v1h-1zM747 499h1v1h-1zM747 514h1v1h-1zM747 529h1v1h-1zM747 544h1v1h-1zM747 560h1v1h-1zM747 575h1v1h-1zM747 590h1v1h-1zM747 605h1v1h-1zM747 620h1v1h-1zM747 635h1v1h-1zM747 650h1v1h-1zM747 665h1v1h-1zM747 680h1v1h-1zM747 695h1v1h-1zM747 710h1v1h-1zM747 725h1v1h-1zM747 740h1v1h-1zM747 756h1v1h-1zM762 484h1v1h-1zM762 499h1v1h-1zM762 514h1v1h-1zM762 529h1v1h-1zM762 544h1v1h-1zM762 560h1v1h-1zM762 575h1v1h-1zM762 590h1v1h-1zM762 605h1v1h-1zM762 620h1v1h-1zM762 635h1v1h-1zM762 650h1v1h-1zM762 665h1v1h-1zM762 680h1v1h-1zM762 695h1v1h-1zM762 710h1v1h-1zM762 725h1v1h-1zM762 740h1v1h-1zM762 756h1v1h-1zM777 484h1v1h-1zM777 499h1v1h-1zM777 514h1v1h-1zM777 529h1v1h-1zM777 544h1v1h-1zM777 560h1v1h-1zM777 575h1v1h-1zM777 590h1v1h-1zM777 605h1v1h-1zM777 620h1v1h-1zM777 635h1v1h-1zM777 650h1v1h-1zM777 665h1v1h-1zM777 680h1v1h-1zM777 695h1v1h-1zM777 710h1v1h-1zM777 725h1v1h-1zM777 740h1v1h-1zM777 756h1v1h-1zM792 484h1v1h-1zM792 499h1v1h-1zM792 514h1v1h-1zM792 529h1v1h-1zM792 544h1v1h-1zM792 560h1v1h-1zM792 575h1v1h-1zM792 590h1v1h-1zM792 605h1v1h-1zM792 620h1v1h-1zM792 635h1v1h-1zM792 650h1v1h-1zM792 665h1v1h-1zM792 680h1v1h-1zM792 695h1v1h-1zM792 710h1v1h-1zM792 725h1v1h-1zM792 740h1v1h-1zM792 756h1v1h-1zM807 484h1v1h-1zM807 499h1v1h-1zM807 514h1v1h-1zM807 529h1v1h-1zM807 544h1v1h-1zM807 560h1v1h-1zM807 575h1v1h-1zM807 590h1v1h-1zM807 605h1v1h-1zM807 620h1v1h-1zM807 635h1v1h-1zM807 650h1v1h-1zM807 665h1v1h-1zM807 680h1v1h-1zM807 695h1v1h-1zM807 710h1v1h-1zM807 725h1v1h-1zM807 740h1v1h-1zM807 756h1v1h-1zM822 484h1v1h-1zM822 499h1v1h-1zM822 514h1v1h-1zM822 529h1v1h-1zM822 544h1v1h-1zM822 560h1v1h-1zM822 575h1v1h-1zM822 590h1v1h-1zM822 605h1v1h-1zM822 620h1v1h-1zM822 635h1v1h-1zM822 650h1v1h-1zM822 665h1v1h-1zM822 680h1v1h-1zM822 695h1v1h-1zM822 710h1v1h-1zM822 725h1v1h-1zM822 740h1v1h-1zM822 756h1v1h-1zM837 484h1v1h-1zM837 499h1v1h-1zM837 514h1v1h-1zM837 529h1v1h-1zM837 544h1v1h-1zM837 560h1v1h-1zM837 575h1v1h-1zM837 590h1v1h-1zM837 605h1v1h-1zM837 620h1v1h-1zM837 635h1v1h-1zM837 650h1v1h-1zM837 665h1v1h-1zM837 680h1v1h-1zM837 695h1v1h-1zM837 710h1v1h-1zM837 725h1v1h-1zM837 740h1v1h-1zM837 756h1v1h-1zM852 484h1v1h-1zM852 499h1v1h-1zM852 514h1v1h-1zM852 529h1v1h-1zM852 544h1v1h-1zM852 560h1v1h-1zM852 575h1v1h-1zM852 590h1v1h-1zM852 605h1v1h-1zM852 620h1v1h-1zM852 635h1v1h-1zM852 650h1v1h-1zM852 665h1v1h-1zM852 680h1v1h-1zM852 695h1v1h-1zM852 710h1v1h-1zM852 725h1v1h-1zM852 740h1v1h-1zM852 756h1v1h-1zM867 484h1v1h-1zM867 499h1v1h-1zM867 514h1v1h-1zM867 529h1v1h-1zM867 544h1v1h-1zM867 560h1v1h-1zM867 575h1v1h-1zM867 590h1v1h-1zM867 605h1v1h-1zM867 620h1v1h-1zM867 635h1v1h-1zM867 650h1v1h-1zM867 665h1v1h-1zM867 680h1v1h-1zM867 695h1v1h-1zM867 710h1v1h-1zM867 725h1v1h-1zM867 740h1v1h-1zM867 756h1v1h-1zM882 484h1v1h-1zM882 499h1v1h-1zM882 514h1v1h-1zM882 529h1v1h-1zM882 544h1v1h-1zM882 560h1v1h-1zM882 575h1v1h-1zM882 590h1v1h-1zM882 605h1v1h-1zM882 620h1v1h-1zM882 635h1v1h-1zM882 650h1v1h-1zM882 665h1v1h-1zM882 680h1v1h-1zM882 695h1v1h-1zM882 710h1v1h-1zM882 725h1v1h-1zM882 740h1v1h-1zM882 756h1v1h-1zM897 484h1v1h-1zM897 499h1v1h-1zM897 514h1v1h-1zM897 529h1v1h-1zM897 544h1v1h-1zM897 560h1v1h-1zM897 575h1v1h-1zM897 590h1v1h-1zM897 605h1v1h-1zM897 620h1v1h-1zM897 635h1v1h-1zM897 650h1v1h-1zM897 665h1v1h-1zM897 680h1v1h-1zM897 695h1v1h-1zM897 710h1v1h-1zM897 725h1v1h-1zM897 740h1v1h-1zM897 756h1v1h-1zM912 484h1v1h-1zM912 499h1v1h-1zM912 514h1v1h-1zM912 529h1v1h-1zM912 544h1v1h-1zM912 560h1v1h-1zM912 575h1v1h-1zM912 590h1v1h-1zM912 605h1v1h-1zM912 620h1v1h-1zM912 635h1v1h-1zM912 650h1v1h-1zM912 665h1v1h-1zM912 680h1v1h-1zM912 695h1v1h-1zM912 710h1v1h-1zM912 725h1v1h-1zM912 740h1v1h-1zM912 756h1v1h-1zM928 484h1v1h-1zM928 499h1v1h-1zM928 514h1v1h-1zM928 529h1v1h-1zM928 544h1v1h-1zM928 560h1v1h-1zM928 575h1v1h-1zM928 590h1v1h-1zM928 605h1v1h-1zM928 620h1v1h-1zM928 635h1v1h-1zM928 650h1v1h-1zM928 665h1v1h-1zM928 680h1v1h-1zM928 695h1v1h-1zM928 710h1v1h-1zM928 725h1v1h-1zM928 740h1v1h-1zM928 756h1v1h-1zM943 484h1v1h-1zM943 499h1v1h-1zM943 514h1v1h-1zM943 529h1v1h-1zM943 544h1v1h-1zM943 560h1v1h-1zM943 575h1v1h-1zM943 590h1v1h-1zM943 605h1v1h-1zM943 620h1v1h-1zM943 635h1v1h-1zM943 650h1v1h-1zM943 665h1v1h-1zM943 680h1v1h-1zM943 695h1v1h-1zM943 710h1v1h-1zM943 725h1v1h-1zM943 740h1v1h-1zM943 756h1v1h-1zM958 484h1v1h-1zM958 499h1v1h-1zM958 514h1v1h-1zM958 529h1v1h-1zM958 544h1v1h-1zM958 560h1v1h-1zM958 575h1v1h-1zM958 590h1v1h-1zM958 605h1v1h-1zM958 620h1v1h-1zM958 635h1v1h-1zM958 650h1v1h-1zM958 665h1v1h-1zM958 680h1v1h-1zM958 695h1v1h-1zM958 710h1v1h-1zM958 725h1v1h-1zM958 740h1v1h-1zM958 756h1v1h-1zM973 484h1v1h-1zM973 499h1v1h-1zM973 514h1v1h-1zM973 529h1v1h-1zM973 544h1v1h-1zM973 560h1v1h-1zM973 575h1v1h-1zM973 590h1v1h-1zM973 605h1v1h-1zM973 620h1v1h-1zM973 635h1v1h-1zM973 650h1v1h-1zM973 665h1v1h-1zM973 680h1v1h-1zM973 695h1v1h-1zM973 710h1v1h-1zM973 725h1v1h-1zM973 740h1v1h-1zM973 756h1v1h-1zM988 484h1v1h-1zM988 499h1v1h-1zM988 514h1v1h-1zM988 529h1v1h-1zM988 544h1v1h-1zM988 560h1v1h-1zM988 575h1v1h-1zM988 590h1v1h-1zM988 605h1v1h-1zM988 620h1v1h-1zM988 635h1v1h-1zM988 650h1v1h-1zM988 665h1v1h-1zM988 680h1v1h-1zM988 695h1v1h-1zM988 710h1v1h-1zM988 725h1v1h-1zM988 740h1v1h-1zM988 756h1v1h-1zM1003 484h1v1h-1zM1003 499h1v1h-1zM1003 514h1v1h-1zM1003 529h1v1h-1zM1003 544h1v1h-1zM1003 560h1v1h-1zM1003 575h1v1h-1zM1003 590h1v1h-1zM1003 605h1v1h-1zM1003 620h1v1h-1zM1003 635h1v1h-1zM1003 650h1v1h-1zM1003 665h1v1h-1zM1003 680h1v1h-1zM1003 695h1v1h-1zM1003 710h1v1h-1zM1003 725h1v1h-1zM1003 740h1v1h-1zM1003 756h1v1h-1z" fill="#000"/><g shape-rendering="auto"><text x="260.5" y="519.7" font-size="11" font-weight="bold" fill="#000" textLength="14" lengthAdjust="spacingAndGlyphs" stroke="#000" stroke-width="0.22">R1</text><text x="254.3" y="548" font-size="11" font-weight="bold" fill="#000" textLength="27.7" lengthAdjust="spacingAndGlyphs" stroke="#000" stroke-width="0.22">{RL}</text><text x="320.9" y="556.8" font-size="11" font-weight="bold" fill="#000" textLength="14.4" lengthAdjust="spacingAndGlyphs" stroke="#000" stroke-width="0.22">V3</text><text x="321.2" y="603.2" font-size="11" font-weight="bold" fill="#000" textLength="24" lengthAdjust="spacingAndGlyphs" stroke="#000" stroke-width="0.22">AC 1</text><text x="245.3" y="594.9" font-size="11" font-weight="bold" fill="#000" textLength="13.1" lengthAdjust="spacingAndGlyphs" stroke="#000" stroke-width="0.22">V1</text><text x="245.2" y="641" font-size="11" font-weight="bold" fill="#000" textLength="24.7" lengthAdjust="spacingAndGlyphs" stroke="#000" stroke-width="0.22">AC 2</text><text x="319.6" y="636" font-size="11" font-weight="bold" fill="#000" textLength="13.8" lengthAdjust="spacingAndGlyphs" stroke="#000" stroke-width="0.22">R7</text><text x="319.6" y="653" font-size="11" font-weight="bold" fill="#000" textLength="20.1" lengthAdjust="spacingAndGlyphs" stroke="#000" stroke-width="0.22">1e6</text><text x="363" y="519.7" font-size="11" font-weight="bold" fill="#000" textLength="13.8" lengthAdjust="spacingAndGlyphs" stroke="#000" stroke-width="0.22">C5</text><text x="351.3" y="548.2" font-size="11" font-weight="bold" fill="#000" textLength="37.3" lengthAdjust="spacingAndGlyphs" stroke="#000" stroke-width="0.22">376.2p</text><text x="415.9" y="519.7" font-size="11" font-weight="bold" fill="#000" textLength="13.5" lengthAdjust="spacingAndGlyphs" stroke="#000" stroke-width="0.22">C4</text><text x="442.4" y="519.7" font-size="11" font-weight="bold" fill="#000" textLength="20.6" lengthAdjust="spacingAndGlyphs" stroke="#000" stroke-width="0.22">C18</text><text x="471.8" y="519.7" font-size="11" font-weight="bold" fill="#000" textLength="21.2" lengthAdjust="spacingAndGlyphs" stroke="#000" stroke-width="0.22">C12</text><text x="505.4" y="519.7" font-size="11" font-weight="bold" fill="#000" textLength="13.6" lengthAdjust="spacingAndGlyphs" stroke="#000" stroke-width="0.22">C7</text><text x="407.2" y="548.2" font-size="11" font-weight="bold" fill="#000" textLength="29.5" lengthAdjust="spacingAndGlyphs" stroke="#000" stroke-width="0.22">{Cm}</text><text x="438.5" y="548.2" font-size="11" font-weight="bold" fill="#000" textLength="29.5" lengthAdjust="spacingAndGlyphs" stroke="#000" stroke-width="0.22">{Cm}</text><text x="468.7" y="548.2" font-size="11" font-weight="bold" fill="#000" textLength="29.5" lengthAdjust="spacingAndGlyphs" stroke="#000" stroke-width="0.22">{Cm}</text><text x="498.8" y="548.2" font-size="11" font-weight="bold" fill="#000" textLength="29.5" lengthAdjust="spacingAndGlyphs" stroke="#000" stroke-width="0.22">{Cm}</text><text x="441.2" y="561.2" font-size="11" font-weight="bold" fill="#000" textLength="13.6" lengthAdjust="spacingAndGlyphs" stroke="#000" stroke-width="0.22">C2</text><text x="471.8" y="561.2" font-size="11" font-weight="bold" fill="#000" textLength="13.6" lengthAdjust="spacingAndGlyphs" stroke="#000" stroke-width="0.22">C1</text><text x="502.5" y="561.2" font-size="11" font-weight="bold" fill="#000" textLength="12.9" lengthAdjust="spacingAndGlyphs" stroke="#000" stroke-width="0.22">C9</text><text x="441.8" y="582.7" font-size="11" font-weight="bold" fill="#000" textLength="37.3" lengthAdjust="spacingAndGlyphs" stroke="#000" stroke-width="0.22">242.2p</text><text x="471.8" y="582.7" font-size="11" font-weight="bold" fill="#000" textLength="37.3" lengthAdjust="spacingAndGlyphs" stroke="#000" stroke-width="0.22">376.3p</text><text x="502.5" y="582.7" font-size="11" font-weight="bold" fill="#000" textLength="37.3" lengthAdjust="spacingAndGlyphs" stroke="#000" stroke-width="0.22">242.2p</text><text x="573.9" y="519.7" font-size="11" font-weight="bold" fill="#000" textLength="14.1" lengthAdjust="spacingAndGlyphs" stroke="#000" stroke-width="0.22">C3</text><text x="562.4" y="548.2" font-size="11" font-weight="bold" fill="#000" textLength="37.5" lengthAdjust="spacingAndGlyphs" stroke="#000" stroke-width="0.22">376.2p</text><text x="654.3" y="550.9" font-size="11" font-weight="bold" fill="#000" textLength="14.1" lengthAdjust="spacingAndGlyphs" stroke="#000" stroke-width="0.22">R2</text><text x="641.9" y="567.2" font-size="11" font-weight="bold" fill="#000" textLength="26.5" lengthAdjust="spacingAndGlyphs" stroke="#000" stroke-width="0.22">{RL}</text><text x="686.5" y="482.3" font-size="11" font-weight="bold" fill="#0000cc" textLength="253" lengthAdjust="spacingAndGlyphs" stroke="#0000cc" stroke-width="0.22">To add filter sections, copy (F6) and drag this</text><text x="686.5" y="496.8" font-size="11" font-weight="bold" fill="#0000cc" textLength="225" lengthAdjust="spacingAndGlyphs" stroke="#0000cc" stroke-width="0.22">to the right of any of the center crystals</text><text x="867" y="582.6" font-size="11" font-weight="bold" fill="#0000cc" textLength="100" lengthAdjust="spacingAndGlyphs" stroke="#0000cc" stroke-width="0.22">Center Frequency</text><text x="867" y="601.9" font-size="11" font-weight="bold" fill="#000" textLength="129.8" lengthAdjust="spacingAndGlyphs" stroke="#000" stroke-width="0.22">.param Fc=5.118526e6</text><text x="762.6" y="632" font-size="11" font-weight="bold" fill="#0000cc" textLength="131" lengthAdjust="spacingAndGlyphs" stroke="#0000cc" stroke-width="0.22">Modify these to change</text><text x="792.7" y="646.4" font-size="11" font-weight="bold" fill="#0000cc" textLength="57.8" lengthAdjust="spacingAndGlyphs" stroke="#0000cc" stroke-width="0.22">bandwidth</text><text x="776.7" y="666" font-size="11" font-weight="bold" fill="#000" textLength="97.3" lengthAdjust="spacingAndGlyphs" stroke="#000" stroke-width="0.22">.param RL=199.5</text><text x="776.7" y="680.6" font-size="11" font-weight="bold" fill="#0000cc" textLength="97.3" lengthAdjust="spacingAndGlyphs" stroke="#0000cc" stroke-width="0.22">.param C1=39.1p</text><text x="166.2" y="722.7" font-size="11" font-weight="bold" fill="#0000cc" textLength="151" lengthAdjust="spacingAndGlyphs" stroke="#0000cc" stroke-width="0.22">(Adjust Simulation params</text><text x="166.7" y="733.5" font-size="11" font-weight="bold" fill="#0000cc" textLength="136.3" lengthAdjust="spacingAndGlyphs" stroke="#0000cc" stroke-width="0.22">for proper sweep range)</text><text x="166.2" y="748.7" font-size="11" font-weight="bold" fill="#000" textLength="158.6" lengthAdjust="spacingAndGlyphs" stroke="#000" stroke-width="0.22">.ac lin 1000 5.116e6 5.121e6</text><text x="155.4" y="767.5" font-size="11" font-weight="bold" fill="#000" textLength="213.6" lengthAdjust="spacingAndGlyphs" stroke="#000" stroke-width="0.22">.meas AC tmp MAX mag(V(Passband))</text><text x="392.9" y="722.7" font-size="11" font-weight="bold" fill="#0000cc" textLength="311.9" lengthAdjust="spacingAndGlyphs" stroke="#0000cc" stroke-width="0.22">&quot;Cm&quot; is the crystal model - edit params for your crystal</text><text x="396.3" y="737.4" font-size="11" font-weight="bold" fill="#0000cc" textLength="192.2" lengthAdjust="spacingAndGlyphs" stroke="#0000cc" stroke-width="0.22">All shunt caps equal; sets filter BW</text><text x="396.3" y="752.6" font-size="11" font-weight="bold" fill="#0000cc" textLength="467" lengthAdjust="spacingAndGlyphs" stroke="#0000cc" stroke-width="0.22">Termination resistance sets ripple; essentially constant for any number of sections</text><text x="396.3" y="767.6" font-size="11" font-weight="bold" fill="#0000cc" textLength="327.2" lengthAdjust="spacingAndGlyphs" stroke="#0000cc" stroke-width="0.22">Probe &quot;Match&quot; &amp; &quot;Passband&quot; labels to plot after analyzing</text><text transform="translate(282.3,596.8) rotate(-90)" font-size="11" font-weight="bold" fill="#000" stroke="#000" stroke-width="0.22" textLength="32.6" lengthAdjust="spacingAndGlyphs">Match</text><text transform="translate(682.3,498.8) rotate(-90)" font-size="11" font-weight="bold" fill="#000" stroke="#000" stroke-width="0.22" textLength="50" lengthAdjust="spacingAndGlyphs">Passband</text></g><rect x="234" y="529" width="1" height="62" fill="#0000ff"/><rect x="234" y="529" width="16" height="1" fill="#0000ff"/><rect x="287" y="529" width="69" height="1" fill="#0000ff"/><rect x="385" y="529" width="23" height="1" fill="#0000ff"/><rect x="528" y="529" width="39" height="1" fill="#0000ff"/><rect x="596" y="529" width="84" height="1" fill="#0000ff"/><rect x="679" y="499" width="1" height="39" fill="#0000ff"/><rect x="679" y="575" width="1" height="106" fill="#0000ff"/><rect x="234" y="680" width="446" height="1" fill="#0000ff"/><rect x="234" y="627" width="1" height="54" fill="#0000ff"/><rect x="309" y="529" width="1" height="24" fill="#0000ff"/><rect x="309" y="590" width="1" height="31" fill="#0000ff"/><rect x="279" y="597" width="1" height="9" fill="#0000ff"/><rect x="279" y="605" width="31" height="1" fill="#0000ff"/><rect x="309" y="658" width="1" height="23" fill="#0000ff"/><rect x="438" y="529" width="1" height="24" fill="#0000ff"/><rect x="438" y="582" width="1" height="99" fill="#0000ff"/><rect x="468" y="529" width="1" height="24" fill="#0000ff"/><rect x="468" y="582" width="1" height="99" fill="#0000ff"/><rect x="498" y="529" width="1" height="24" fill="#0000ff"/><rect x="498" y="582" width="1" height="99" fill="#0000ff"/><rect x="438" y="680" width="1" height="16" fill="#0000ff"/><path d="M287.5 529.5 L283.5 529.5 L279.5 537.5 L272.5 522.5 L264.5 537.5 L257.5 522.5 L253.5 529.5 L249.5 529.5" fill="none" stroke="#000080" stroke-width="1" stroke-linecap="square"/><path d="M309.5 620.5 L309.5 624.5 L317.5 627.5 L302.5 635.5 L317.5 642.5 L302.5 650.5 L309.5 654.5 L309.5 658.5" fill="none" stroke="#000080" stroke-width="1" stroke-linecap="square"/><path d="M679.5 537.5 L679.5 541.5 L686.5 544.5 L671.5 552.5 L686.5 559.5 L671.5 567.5 L679.5 571.5 L679.5 575.5" fill="none" stroke="#000080" stroke-width="1" stroke-linecap="square"/><path d="M355.5 529.5 L368.5 529.5" fill="none" stroke="#000080" stroke-width="1" stroke-linecap="square"/><path d="M372.5 529.5 L385.5 529.5" fill="none" stroke="#000080" stroke-width="1" stroke-linecap="square"/><path d="M368.5 522.5 L368.5 537.5" fill="none" stroke="#000080" stroke-width="1" stroke-linecap="square"/><path d="M372.5 522.5 L372.5 537.5" fill="none" stroke="#000080" stroke-width="1" stroke-linecap="square"/><path d="M566.5 529.5 L579.5 529.5" fill="none" stroke="#000080" stroke-width="1" stroke-linecap="square"/><path d="M583.5 529.5 L596.5 529.5" fill="none" stroke="#000080" stroke-width="1" stroke-linecap="square"/><path d="M579.5 522.5 L579.5 537.5" fill="none" stroke="#000080" stroke-width="1" stroke-linecap="square"/><path d="M583.5 522.5 L583.5 537.5" fill="none" stroke="#000080" stroke-width="1" stroke-linecap="square"/><path d="M438.5 552.5 L438.5 565.5" fill="none" stroke="#000080" stroke-width="1" stroke-linecap="square"/><path d="M438.5 569.5 L438.5 582.5" fill="none" stroke="#000080" stroke-width="1" stroke-linecap="square"/><path d="M430.5 565.5 L445.5 565.5" fill="none" stroke="#000080" stroke-width="1" stroke-linecap="square"/><path d="M430.5 569.5 L445.5 569.5" fill="none" stroke="#000080" stroke-width="1" stroke-linecap="square"/><path d="M468.5 552.5 L468.5 565.5" fill="none" stroke="#000080" stroke-width="1" stroke-linecap="square"/><path d="M468.5 569.5 L468.5 582.5" fill="none" stroke="#000080" stroke-width="1" stroke-linecap="square"/><path d="M460.5 565.5 L475.5 565.5" fill="none" stroke="#000080" stroke-width="1" stroke-linecap="square"/><path d="M460.5 569.5 L475.5 569.5" fill="none" stroke="#000080" stroke-width="1" stroke-linecap="square"/><path d="M498.5 552.5 L498.5 565.5" fill="none" stroke="#000080" stroke-width="1" stroke-linecap="square"/><path d="M498.5 569.5 L498.5 582.5" fill="none" stroke="#000080" stroke-width="1" stroke-linecap="square"/><path d="M490.5 565.5 L505.5 565.5" fill="none" stroke="#000080" stroke-width="1" stroke-linecap="square"/><path d="M490.5 569.5 L505.5 569.5" fill="none" stroke="#000080" stroke-width="1" stroke-linecap="square"/><path d="M407.5 529.5 L417.5 529.5" fill="none" stroke="#000080" stroke-width="1" stroke-linecap="square"/><path d="M428.5 529.5 L438.5 529.5" fill="none" stroke="#000080" stroke-width="1" stroke-linecap="square"/><path d="M417.5 522.5 L417.5 537.5" fill="none" stroke="#000080" stroke-width="1" stroke-linecap="square"/><path d="M428.5 522.5 L428.5 537.5" fill="none" stroke="#000080" stroke-width="1" stroke-linecap="square"/><path d="M421.5 526.5 L424.5 526.5 L424.5 533.5 L421.5 533.5 L421.5 526.5" fill="none" stroke="#000080" stroke-width="1" stroke-linecap="square"/><path d="M438.5 529.5 L447.5 529.5" fill="none" stroke="#000080" stroke-width="1" stroke-linecap="square"/><path d="M458.5 529.5 L468.5 529.5" fill="none" stroke="#000080" stroke-width="1" stroke-linecap="square"/><path d="M447.5 522.5 L447.5 537.5" fill="none" stroke="#000080" stroke-width="1" stroke-linecap="square"/><path d="M458.5 522.5 L458.5 537.5" fill="none" stroke="#000080" stroke-width="1" stroke-linecap="square"/><path d="M451.5 526.5 L455.5 526.5 L455.5 533.5 L451.5 533.5 L451.5 526.5" fill="none" stroke="#000080" stroke-width="1" stroke-linecap="square"/><path d="M468.5 529.5 L477.5 529.5" fill="none" stroke="#000080" stroke-width="1" stroke-linecap="square"/><path d="M488.5 529.5 L498.5 529.5" fill="none" stroke="#000080" stroke-width="1" stroke-linecap="square"/><path d="M477.5 522.5 L477.5 537.5" fill="none" stroke="#000080" stroke-width="1" stroke-linecap="square"/><path d="M488.5 522.5 L488.5 537.5" fill="none" stroke="#000080" stroke-width="1" stroke-linecap="square"/><path d="M481.5 526.5 L485.5 526.5 L485.5 533.5 L481.5 533.5 L481.5 526.5" fill="none" stroke="#000080" stroke-width="1" stroke-linecap="square"/><path d="M498.5 529.5 L507.5 529.5" fill="none" stroke="#000080" stroke-width="1" stroke-linecap="square"/><path d="M519.5 529.5 L528.5 529.5" fill="none" stroke="#000080" stroke-width="1" stroke-linecap="square"/><path d="M507.5 522.5 L507.5 537.5" fill="none" stroke="#000080" stroke-width="1" stroke-linecap="square"/><path d="M519.5 522.5 L519.5 537.5" fill="none" stroke="#000080" stroke-width="1" stroke-linecap="square"/><path d="M511.5 526.5 L515.5 526.5 L515.5 533.5 L511.5 533.5 L511.5 526.5" fill="none" stroke="#000080" stroke-width="1" stroke-linecap="square"/><g shape-rendering="auto"><path d="M234.5 590.5 L234.5 593.5" fill="none" stroke="#000080" stroke-width="1" stroke-linecap="square"/><path d="M234.5 624.5 L234.5 627.5" fill="none" stroke="#000080" stroke-width="1" stroke-linecap="square"/><path d="M234.5 595.5 L234.5 603.5" fill="none" stroke="#000080" stroke-width="1" stroke-linecap="square"/><path d="M230.5 599.5 L238.5 599.5" fill="none" stroke="#000080" stroke-width="1" stroke-linecap="square"/><path d="M230.5 618.5 L238.5 618.5" fill="none" stroke="#000080" stroke-width="1" stroke-linecap="square"/><circle cx="234.5" cy="609.01" r="14.6" fill="none" stroke="#000080" stroke-width="1"/><path d="M309.5 552.5 L309.5 556.5" fill="none" stroke="#000080" stroke-width="1" stroke-linecap="square"/><path d="M309.5 586.5 L309.5 590.5" fill="none" stroke="#000080" stroke-width="1" stroke-linecap="square"/><path d="M309.5 558.5 L309.5 565.5" fill="none" stroke="#000080" stroke-width="1" stroke-linecap="square"/><path d="M306.5 561.5 L313.5 561.5" fill="none" stroke="#000080" stroke-width="1" stroke-linecap="square"/><path d="M306.5 580.5 L313.5 580.5" fill="none" stroke="#000080" stroke-width="1" stroke-linecap="square"/><circle cx="309.5" cy="571.31" r="14.6" fill="none" stroke="#000080" stroke-width="1"/></g><path d="M429.5 695.5 H446.5 L438.5 704.5 Z" fill="none" stroke="#0000ff" stroke-width="1"/><rect x="307" y="527" width="5" height="5" fill="#0000ff" /><rect x="436" y="527" width="5" height="5" fill="#0000ff" /><rect x="466" y="527" width="5" height="5" fill="#0000ff" /><rect x="496" y="527" width="5" height="5" fill="#0000ff" /><rect x="677" y="527" width="5" height="5" fill="#0000ff" /><rect x="307" y="603" width="5" height="5" fill="#0000ff" /><rect x="307" y="678" width="5" height="5" fill="#0000ff" /><rect x="436" y="678" width="5" height="5" fill="#0000ff" /><rect x="466" y="678" width="5" height="5" fill="#0000ff" /><rect x="496" y="678" width="5" height="5" fill="#0000ff" /></g></svg>
</body></html>
